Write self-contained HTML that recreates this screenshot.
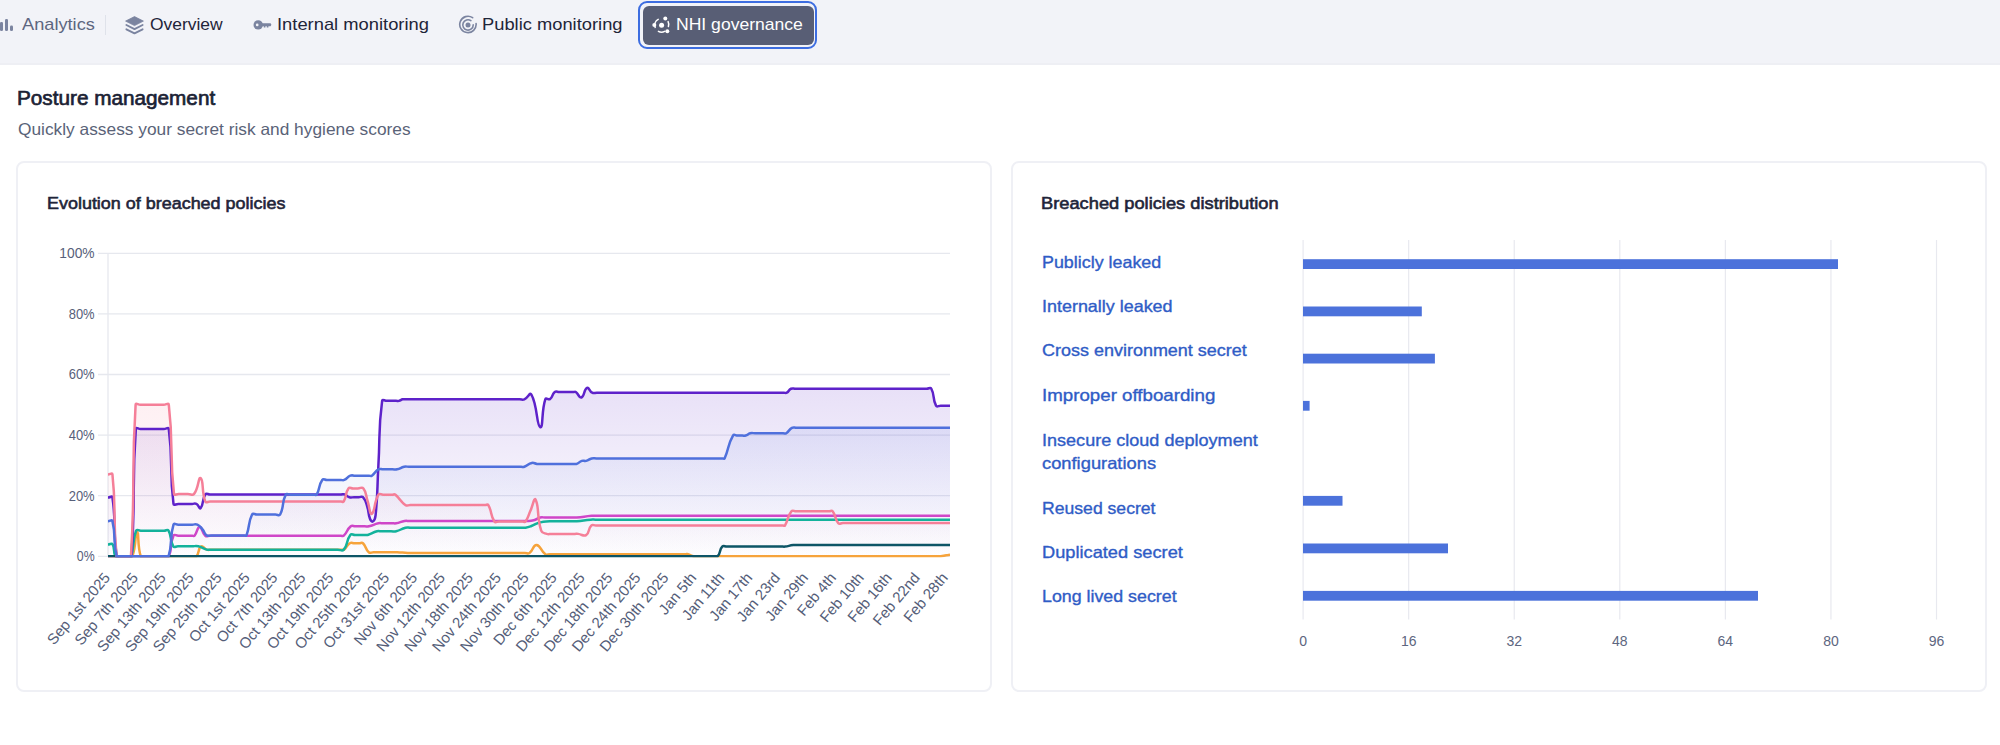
<!DOCTYPE html>
<html><head><meta charset="utf-8"><title>NHI governance</title>
<style>
html,body{margin:0;padding:0;background:#fff;}
body{width:2000px;height:745px;overflow:hidden;position:relative;font-family:"Liberation Sans", sans-serif;}
.t{position:absolute;white-space:nowrap;transform-origin:0 0;}
.nav{position:absolute;left:0;top:0;width:2000px;height:63px;background:#f2f3f8;border-bottom:2px solid #eeeff4;}
.ic{position:absolute;}
.sep{position:absolute;}
.ring{position:absolute;left:638px;top:1px;width:175px;height:43.5px;border:2px solid #3d6de0;border-radius:9px;}
.btn{position:absolute;left:642.5px;top:5.5px;width:171px;height:39px;background:#585e75;border-radius:6px;}
.card{position:absolute;top:161px;width:976px;height:531px;box-sizing:border-box;border:2px solid #eff0f5;border-radius:8px;background:#fff;}
svg.full{position:absolute;left:0;top:0;}
svg.full text{font-family:"Liberation Sans", sans-serif;}
</style></head><body>
<div class="nav"></div>

<svg class="ic" style="left:0;top:17px" width="14" height="15" viewBox="0 0 14 15">
 <rect x="0" y="5" width="3" height="9" rx="1.3" fill="#7b84a0"/>
 <rect x="5" y="2" width="3" height="12" rx="1.3" fill="#7b84a0"/>
 <rect x="10" y="8.5" width="3" height="5.5" rx="1.3" fill="#7b84a0"/>
</svg>
<div class="sep" style="left:104.5px;top:15px;width:1px;height:20px;background:#dfe2ea"></div>
<svg class="ic" style="left:124.5px;top:15.5px" width="19" height="19" viewBox="0 0 19 19">
 <path d="M9.5 0.6 L18.4 5.1 L9.5 9.6 L0.6 5.1 Z" fill="#7b84a0" stroke="#7b84a0" stroke-width="0.8" stroke-linejoin="round"/>
 <path d="M1.4 9.0 L9.5 13.1 L17.6 9.0" fill="none" stroke="#7b84a0" stroke-width="1.9" stroke-linejoin="round" stroke-linecap="round"/>
 <path d="M1.4 13.3 L9.5 17.4 L17.6 13.3" fill="none" stroke="#7b84a0" stroke-width="1.9" stroke-linejoin="round" stroke-linecap="round"/>
</svg>
<svg class="ic" style="left:253px;top:19px" width="20" height="12" viewBox="0 0 20 12">
 <circle cx="5.2" cy="5.9" r="4.7" fill="#7b84a0"/>
 <circle cx="4.2" cy="5.9" r="1.35" fill="#f2f3f8"/>
 <path d="M8.5 4.3 H17.6 L18.4 5.75 L17.6 7.3 H15.4 V8.6 H13.8 V7.3 H12.4 V8.4 H10.8 V7.3 H8.5 Z" fill="#7b84a0"/>
</svg>
<svg class="ic" style="left:457.7px;top:15px" width="20" height="20" viewBox="0 0 20 20">
 <path d="M14.6 2.7 A8.2 8.2 0 1 0 18.1 8.6" fill="none" stroke="#7b84a0" stroke-width="1.6" stroke-linecap="round"/>
 <path d="M12.9 5.6 A5.2 5.2 0 1 0 15.2 9.9" fill="none" stroke="#7b84a0" stroke-width="1.6" stroke-linecap="round"/>
 <circle cx="10" cy="9.9" r="2.5" fill="#7b84a0"/>
</svg>
<div class="ring"></div>
<div class="btn"></div>
<svg class="ic" style="left:652px;top:16px" width="19" height="18" viewBox="0 0 19 18">
 <path d="M6.2 3.4 A6.6 6.6 0 0 0 3.2 11.4" fill="none" stroke="#fff" stroke-width="1.5" stroke-linecap="round"/>
 <path d="M6.4 15.3 A6.6 6.6 0 0 0 12.6 15.4" fill="none" stroke="#fff" stroke-width="1.5" stroke-linecap="round"/>
 <path d="M16.1 5.6 A6.6 6.6 0 0 1 16.4 10.6" fill="none" stroke="#fff" stroke-width="1.5" stroke-linecap="round"/>
 <circle cx="9.6" cy="9.2" r="2.5" fill="#fff"/>
 <circle cx="13.3" cy="2.5" r="2.0" fill="#fff"/>
 <circle cx="2.3" cy="9.0" r="2.0" fill="#fff"/>
 <circle cx="15.3" cy="15.2" r="2.0" fill="#fff"/>
</svg>

<div class="card" style="left:16px"></div>
<div class="card" style="left:1011px"></div>
<svg class="full" width="2000" height="745" viewBox="0 0 2000 745">
<defs>
<clipPath id="plotclip"><rect x="108" y="250" width="842" height="307.6"/></clipPath>
<linearGradient id="gpurple" gradientUnits="userSpaceOnUse" x1="0" y1="385" x2="0" y2="560"><stop offset="0" stop-color="#4a0ec2" stop-opacity="0.13"/><stop offset="1" stop-color="#4a0ec2" stop-opacity="0.0"/></linearGradient>
<linearGradient id="gpink" gradientUnits="userSpaceOnUse" x1="0" y1="400" x2="0" y2="560"><stop offset="0" stop-color="#f57f98" stop-opacity="0.12"/><stop offset="1" stop-color="#f57f98" stop-opacity="0.0"/></linearGradient>
<linearGradient id="gblue" gradientUnits="userSpaceOnUse" x1="0" y1="425" x2="0" y2="560"><stop offset="0" stop-color="#4f70dc" stop-opacity="0.11"/><stop offset="1" stop-color="#4f70dc" stop-opacity="0.0"/></linearGradient>
</defs><line x1="98" x2="950" y1="556.30" y2="556.30" stroke="#e6e8ee" stroke-width="1.3"/>
<line x1="98" x2="950" y1="495.70" y2="495.70" stroke="#e6e8ee" stroke-width="1.3"/>
<line x1="98" x2="950" y1="435.10" y2="435.10" stroke="#e6e8ee" stroke-width="1.3"/>
<line x1="98" x2="950" y1="374.50" y2="374.50" stroke="#e6e8ee" stroke-width="1.3"/>
<line x1="98" x2="950" y1="313.90" y2="313.90" stroke="#e6e8ee" stroke-width="1.3"/>
<line x1="98" x2="950" y1="253.30" y2="253.30" stroke="#e6e8ee" stroke-width="1.3"/>
<line x1="108" x2="108" y1="253" y2="556.5" stroke="#e6e8ee" stroke-width="1.3"/>
<g clip-path="url(#plotclip)">
<path d="M108.00,497.52 C110.22,497.52 112.14,495.46 112.44,497.52 C116.47,524.85 112.54,529.07 116.65,556.30 C116.98,556.30 118.99,556.30 121.33,556.30 C123.67,556.30 123.67,556.30 126.01,556.30 C128.70,556.30 131.19,556.30 131.39,556.30 C136.10,495.25 131.43,490.42 135.83,429.04 C136.00,426.79 138.17,429.04 140.51,429.04 C142.85,429.04 142.85,429.04 145.19,429.04 C147.53,429.04 147.53,429.04 149.87,429.04 C152.21,429.04 152.21,429.04 154.55,429.04 C156.89,429.04 156.89,429.04 159.22,429.04 C161.56,429.04 161.56,429.04 163.90,429.04 C166.36,429.04 168.52,426.74 168.81,429.04 C173.31,464.16 169.09,468.66 173.49,503.88 C173.77,506.08 175.83,503.88 178.17,503.88 C180.51,503.88 180.51,503.88 182.85,503.88 C185.19,503.88 185.19,503.88 187.53,503.88 C189.87,503.88 189.87,503.88 192.20,503.88 C194.31,503.88 194.67,503.00 196.41,503.88 C198.88,505.13 199.32,509.50 200.62,508.12 C203.77,504.80 201.77,499.64 205.30,494.49 C206.45,492.82 207.64,494.49 209.98,494.49 C212.32,494.49 212.32,494.49 214.66,494.49 C217.00,494.49 217.00,494.49 219.34,494.49 C221.68,494.49 221.68,494.49 224.01,494.49 C226.35,494.49 226.35,494.49 228.69,494.49 C231.03,494.49 231.03,494.49 233.37,494.49 C235.71,494.49 235.71,494.49 238.05,494.49 C240.39,494.49 240.39,494.49 242.73,494.49 C245.07,494.49 245.07,494.49 247.40,494.49 C249.74,494.49 249.74,494.49 252.08,494.49 C254.42,494.49 254.42,494.49 256.76,494.49 C259.10,494.49 259.10,494.49 261.44,494.49 C263.78,494.49 263.78,494.49 266.12,494.49 C268.46,494.49 268.46,494.49 270.79,494.49 C273.13,494.49 273.13,494.49 275.47,494.49 C277.81,494.49 277.81,494.49 280.15,494.49 C282.49,494.49 282.49,494.49 284.83,494.49 C287.17,494.49 287.17,494.49 289.51,494.49 C291.85,494.49 291.85,494.49 294.18,494.49 C296.52,494.49 296.52,494.49 298.86,494.49 C301.20,494.49 301.20,494.49 303.54,494.49 C305.88,494.49 305.88,494.49 308.22,494.49 C310.56,494.49 310.56,494.49 312.90,494.49 C315.24,494.49 315.24,494.49 317.57,494.49 C319.91,494.49 319.91,494.49 322.25,494.49 C324.59,494.49 324.59,494.49 326.93,494.49 C329.27,494.49 329.27,494.49 331.61,494.49 C333.95,494.49 333.95,494.49 336.29,494.49 C338.63,494.49 338.63,494.49 340.96,494.49 C342.84,494.49 342.99,493.93 344.71,494.49 C347.20,495.29 346.88,496.48 349.38,497.21 C351.55,497.85 351.72,497.21 354.06,497.21 C356.40,497.21 356.40,497.21 358.74,497.21 C360.85,497.21 361.71,495.87 362.95,497.21 C365.92,500.42 365.62,501.57 367.16,506.30 C369.13,512.33 367.82,512.93 369.97,518.73 C370.63,520.51 371.74,522.07 372.77,521.45 C374.54,520.40 375.25,518.69 375.58,515.39 C378.06,490.67 376.96,490.40 378.39,465.40 C380.23,433.13 378.20,430.95 382.13,400.86 C382.41,398.68 384.47,400.86 386.81,400.86 C389.15,400.86 389.15,400.86 391.49,400.86 C393.83,400.86 393.83,400.86 396.16,400.86 C397.57,400.86 397.63,401.17 398.97,400.86 C400.90,400.41 400.76,399.70 402.71,399.35 C404.97,398.94 405.05,399.35 407.39,399.35 C409.73,399.35 409.73,399.35 412.07,399.35 C414.41,399.35 414.41,399.35 416.75,399.35 C419.09,399.35 419.09,399.35 421.43,399.35 C423.76,399.35 423.76,399.35 426.10,399.35 C428.44,399.35 428.44,399.35 430.78,399.35 C433.12,399.35 433.12,399.35 435.46,399.35 C437.80,399.35 437.80,399.35 440.14,399.35 C442.48,399.35 442.48,399.35 444.82,399.35 C447.15,399.35 447.15,399.35 449.49,399.35 C451.83,399.35 451.83,399.35 454.17,399.35 C456.51,399.35 456.51,399.35 458.85,399.35 C461.19,399.35 461.19,399.35 463.53,399.35 C465.87,399.35 465.87,399.35 468.21,399.35 C470.55,399.35 470.55,399.35 472.88,399.35 C475.22,399.35 475.22,399.35 477.56,399.35 C479.90,399.35 479.90,399.35 482.24,399.35 C484.58,399.35 484.58,399.35 486.92,399.35 C489.26,399.35 489.26,399.35 491.60,399.35 C493.94,399.35 493.94,399.35 496.27,399.35 C498.61,399.35 498.61,399.35 500.95,399.35 C503.29,399.35 503.29,399.35 505.63,399.35 C507.97,399.35 507.97,399.35 510.31,399.35 C512.65,399.35 512.65,399.35 514.99,399.35 C517.33,399.35 517.33,399.35 519.66,399.35 C522.00,399.35 522.27,400.20 524.34,399.35 C528.12,397.78 529.76,391.70 531.36,394.50 C537.71,405.63 536.44,425.99 540.25,427.22 C543.46,428.26 541.17,411.15 545.39,399.04 C546.08,397.07 548.40,400.29 550.07,399.04 C553.07,396.81 551.75,394.31 554.75,392.07 C556.42,390.83 557.09,392.07 559.43,392.07 C561.77,392.07 561.77,392.07 564.11,392.07 C566.44,392.07 566.44,392.07 568.78,392.07 C571.12,392.07 571.12,392.07 573.46,392.07 C574.63,392.07 574.89,391.45 575.80,392.07 C578.86,394.17 579.10,398.40 581.41,397.53 C584.72,396.28 583.73,389.32 587.03,387.83 C589.11,386.89 589.22,391.22 592.17,392.68 C594.13,393.65 594.51,392.68 596.85,392.68 C599.19,392.68 599.19,392.68 601.53,392.68 C603.87,392.68 603.87,392.68 606.21,392.68 C608.55,392.68 608.55,392.68 610.88,392.68 C613.22,392.68 613.22,392.68 615.56,392.68 C617.90,392.68 617.90,392.68 620.24,392.68 C622.58,392.68 622.58,392.68 624.92,392.68 C627.26,392.68 627.26,392.68 629.60,392.68 C631.94,392.68 631.94,392.68 634.27,392.68 C636.61,392.68 636.61,392.68 638.95,392.68 C641.29,392.68 641.29,392.68 643.63,392.68 C645.97,392.68 645.97,392.68 648.31,392.68 C650.65,392.68 650.65,392.68 652.99,392.68 C655.33,392.68 655.33,392.68 657.66,392.68 C660.00,392.68 660.00,392.68 662.34,392.68 C664.68,392.68 664.68,392.68 667.02,392.68 C669.36,392.68 669.36,392.68 671.70,392.68 C674.04,392.68 674.04,392.68 676.38,392.68 C678.72,392.68 678.72,392.68 681.05,392.68 C683.39,392.68 683.39,392.68 685.73,392.68 C688.07,392.68 688.07,392.68 690.41,392.68 C692.75,392.68 692.75,392.68 695.09,392.68 C697.43,392.68 697.43,392.68 699.77,392.68 C702.11,392.68 702.11,392.68 704.44,392.68 C706.78,392.68 706.78,392.68 709.12,392.68 C711.46,392.68 711.46,392.68 713.80,392.68 C716.14,392.68 716.14,392.68 718.48,392.68 C720.82,392.68 720.82,392.68 723.16,392.68 C725.50,392.68 725.50,392.68 727.84,392.68 C730.17,392.68 730.17,392.68 732.51,392.68 C734.85,392.68 734.85,392.68 737.19,392.68 C739.53,392.68 739.53,392.68 741.87,392.68 C744.21,392.68 744.21,392.68 746.55,392.68 C748.89,392.68 748.89,392.68 751.23,392.68 C753.56,392.68 753.56,392.68 755.90,392.68 C758.24,392.68 758.24,392.68 760.58,392.68 C762.92,392.68 762.92,392.68 765.26,392.68 C767.60,392.68 767.60,392.68 769.94,392.68 C772.28,392.68 772.28,392.68 774.62,392.68 C776.95,392.68 776.95,392.68 779.29,392.68 C781.63,392.68 781.63,392.68 783.97,392.68 C785.37,392.68 785.63,393.32 786.78,392.68 C789.14,391.36 788.53,389.83 790.99,388.74 C792.98,387.86 793.33,388.74 795.67,388.74 C798.00,388.74 798.00,388.74 800.34,388.74 C802.68,388.74 802.68,388.74 805.02,388.74 C807.36,388.74 807.36,388.74 809.70,388.74 C812.04,388.74 812.04,388.74 814.38,388.74 C816.72,388.74 816.72,388.74 819.06,388.74 C821.39,388.74 821.39,388.74 823.73,388.74 C826.07,388.74 826.07,388.74 828.41,388.74 C830.75,388.74 830.75,388.74 833.09,388.74 C835.43,388.74 835.43,388.74 837.77,388.74 C840.11,388.74 840.11,388.74 842.45,388.74 C844.79,388.74 844.79,388.74 847.12,388.74 C849.46,388.74 849.46,388.74 851.80,388.74 C854.14,388.74 854.14,388.74 856.48,388.74 C858.82,388.74 858.82,388.74 861.16,388.74 C863.50,388.74 863.50,388.74 865.84,388.74 C868.17,388.74 868.17,388.74 870.51,388.74 C872.85,388.74 872.85,388.74 875.19,388.74 C877.53,388.74 877.53,388.74 879.87,388.74 C882.21,388.74 882.21,388.74 884.55,388.74 C886.89,388.74 886.89,388.74 889.23,388.74 C891.57,388.74 891.57,388.74 893.90,388.74 C896.24,388.74 896.24,388.74 898.58,388.74 C900.92,388.74 900.92,388.74 903.26,388.74 C905.60,388.74 905.60,388.74 907.94,388.74 C910.28,388.74 910.28,388.74 912.62,388.74 C914.95,388.74 914.95,388.74 917.29,388.74 C919.63,388.74 919.63,388.74 921.97,388.74 C924.31,388.74 924.31,388.74 926.65,388.74 C928.99,388.74 930.35,386.96 931.33,388.74 C935.02,395.44 932.31,399.01 936.01,405.71 C936.99,407.49 938.35,405.71 940.68,405.71 C943.02,405.71 943.02,405.71 945.36,405.71 C947.68,405.71 947.68,405.71 950.00,405.71 L950,556.30 L108,556.30 Z" fill="url(#gpurple)"/>
<path d="M108.00,474.49 C110.22,474.49 112.22,472.39 112.44,474.49 C116.55,513.29 112.45,517.60 116.65,556.30 C116.89,556.30 118.99,556.30 121.33,556.30 C123.67,556.30 123.67,556.30 126.01,556.30 C128.47,556.30 130.77,556.30 130.92,556.30 C135.57,482.93 131.06,478.28 135.60,404.80 C135.74,402.53 137.94,404.80 140.28,404.80 C142.62,404.80 142.62,404.80 144.96,404.80 C147.30,404.80 147.30,404.80 149.63,404.80 C151.97,404.80 151.97,404.80 154.31,404.80 C156.65,404.80 156.65,404.80 158.99,404.80 C161.33,404.80 161.33,404.80 163.67,404.80 C166.24,404.80 168.53,402.37 168.81,404.80 C173.68,446.91 169.29,451.56 173.96,493.88 C174.20,496.10 176.30,493.88 178.64,493.88 C180.98,493.88 180.98,493.88 183.32,493.88 C185.65,493.88 185.65,493.88 187.99,493.88 C191.03,493.88 192.42,495.95 194.08,493.88 C198.73,488.07 198.28,476.54 200.62,478.13 C203.89,480.33 201.39,491.71 205.30,501.46 C206.07,503.37 207.64,501.46 209.98,501.46 C212.32,501.46 212.32,501.46 214.66,501.46 C217.00,501.46 217.00,501.46 219.34,501.46 C221.68,501.46 221.68,501.46 224.01,501.46 C226.35,501.46 226.35,501.46 228.69,501.46 C231.03,501.46 231.03,501.46 233.37,501.46 C235.71,501.46 235.71,501.46 238.05,501.46 C240.39,501.46 240.39,501.46 242.73,501.46 C245.07,501.46 245.07,501.46 247.40,501.46 C249.74,501.46 249.74,501.46 252.08,501.46 C254.42,501.46 254.42,501.46 256.76,501.46 C259.10,501.46 259.10,501.46 261.44,501.46 C263.78,501.46 263.78,501.46 266.12,501.46 C268.46,501.46 268.46,501.46 270.79,501.46 C273.13,501.46 273.13,501.46 275.47,501.46 C277.81,501.46 277.81,501.46 280.15,501.46 C282.49,501.46 282.49,501.46 284.83,501.46 C287.17,501.46 287.17,501.46 289.51,501.46 C291.85,501.46 291.85,501.46 294.18,501.46 C296.52,501.46 296.52,501.46 298.86,501.46 C301.20,501.46 301.20,501.46 303.54,501.46 C305.88,501.46 305.88,501.46 308.22,501.46 C310.56,501.46 310.56,501.46 312.90,501.46 C315.24,501.46 315.24,501.46 317.57,501.46 C319.91,501.46 319.91,501.46 322.25,501.46 C324.59,501.46 324.59,501.46 326.93,501.46 C329.27,501.46 329.27,501.46 331.61,501.46 C333.95,501.46 333.95,501.46 336.29,501.46 C338.63,501.46 338.63,501.46 340.96,501.46 C342.37,501.46 343.14,502.56 343.77,501.46 C346.88,496.04 344.95,493.30 348.45,488.43 C349.63,486.78 350.79,488.43 353.13,488.43 C355.47,488.43 355.47,488.43 357.81,488.43 C360.61,488.43 361.97,486.55 363.42,488.43 C366.88,492.91 365.52,494.79 367.63,501.15 C369.73,507.52 369.70,515.17 371.84,513.88 C375.08,511.92 373.83,502.46 378.39,494.64 C379.44,492.84 380.73,494.64 383.07,494.64 C385.41,494.64 385.41,494.64 387.74,494.64 C390.08,494.64 390.08,494.64 392.42,494.64 C393.83,494.64 394.16,493.88 395.23,494.64 C398.13,496.69 397.71,497.54 400.38,500.24 C402.85,502.76 402.56,503.63 405.52,505.09 C407.48,506.06 407.86,505.09 410.20,505.09 C412.54,505.09 412.54,505.09 414.88,505.09 C417.22,505.09 417.22,505.09 419.55,505.09 C421.89,505.09 421.89,505.09 424.23,505.09 C426.57,505.09 426.57,505.09 428.91,505.09 C431.25,505.09 431.25,505.09 433.59,505.09 C435.93,505.09 435.93,505.09 438.27,505.09 C440.61,505.09 440.61,505.09 442.94,505.09 C445.28,505.09 445.28,505.09 447.62,505.09 C449.96,505.09 449.96,505.09 452.30,505.09 C454.64,505.09 454.64,505.09 456.98,505.09 C459.32,505.09 459.32,505.09 461.66,505.09 C464.00,505.09 464.00,505.09 466.33,505.09 C468.67,505.09 468.67,505.09 471.01,505.09 C473.35,505.09 473.35,505.09 475.69,505.09 C478.03,505.09 478.03,505.09 480.37,505.09 C482.71,505.09 482.71,505.09 485.05,505.09 C486.68,505.09 487.58,503.80 488.32,505.09 C492.26,511.98 490.16,515.00 494.40,521.45 C495.54,523.18 496.74,521.45 499.08,521.45 C501.42,521.45 501.42,521.45 503.76,521.45 C506.10,521.45 506.10,521.45 508.44,521.45 C510.78,521.45 510.78,521.45 513.11,521.45 C515.45,521.45 515.45,521.45 517.79,521.45 C520.13,521.45 520.13,521.45 522.47,521.45 C523.99,521.45 524.69,522.55 525.51,521.45 C528.67,517.25 527.98,516.16 530.42,510.85 C533.01,505.25 534.05,496.86 535.57,499.64 C539.43,506.71 536.54,516.37 541.18,530.54 C542.15,533.49 543.80,532.91 546.80,533.88 C548.94,534.57 549.14,533.88 551.47,533.88 C553.81,533.88 553.81,533.88 556.15,533.88 C558.49,533.88 558.49,533.88 560.83,533.88 C563.17,533.88 563.17,533.88 565.51,533.88 C567.85,533.88 567.85,533.88 570.19,533.88 C572.53,533.88 572.53,533.88 574.86,533.88 C576.50,533.88 576.51,533.70 578.14,533.88 C582.13,534.31 583.30,536.86 586.09,535.09 C589.85,532.70 587.81,528.88 591.24,525.55 C592.72,524.11 593.58,525.55 595.92,525.55 C598.25,525.55 598.25,525.55 600.59,525.55 C602.93,525.55 602.93,525.55 605.27,525.55 C607.61,525.55 607.61,525.55 609.95,525.55 C612.29,525.55 612.29,525.55 614.63,525.55 C616.97,525.55 616.97,525.55 619.31,525.55 C621.64,525.55 621.64,525.55 623.98,525.55 C626.32,525.55 626.32,525.55 628.66,525.55 C631.00,525.55 631.00,525.55 633.34,525.55 C635.68,525.55 635.68,525.55 638.02,525.55 C640.36,525.55 640.36,525.55 642.70,525.55 C645.03,525.55 645.03,525.55 647.37,525.55 C649.71,525.55 649.71,525.55 652.05,525.55 C654.39,525.55 654.39,525.55 656.73,525.55 C659.07,525.55 659.07,525.55 661.41,525.55 C663.75,525.55 663.75,525.55 666.09,525.55 C668.42,525.55 668.42,525.55 670.76,525.55 C673.10,525.55 673.10,525.55 675.44,525.55 C677.78,525.55 677.78,525.55 680.12,525.55 C682.46,525.55 682.46,525.55 684.80,525.55 C687.14,525.55 687.14,525.55 689.48,525.55 C691.81,525.55 691.81,525.55 694.15,525.55 C696.49,525.55 696.49,525.55 698.83,525.55 C701.17,525.55 701.17,525.55 703.51,525.55 C705.85,525.55 705.85,525.55 708.19,525.55 C710.53,525.55 710.53,525.55 712.87,525.55 C715.20,525.55 715.20,525.55 717.54,525.55 C719.88,525.55 719.88,525.55 722.22,525.55 C724.56,525.55 724.56,525.55 726.90,525.55 C729.24,525.55 729.24,525.55 731.58,525.55 C733.92,525.55 733.92,525.55 736.26,525.55 C738.59,525.55 738.59,525.55 740.93,525.55 C743.27,525.55 743.27,525.55 745.61,525.55 C747.95,525.55 747.95,525.55 750.29,525.55 C752.63,525.55 752.63,525.55 754.97,525.55 C757.31,525.55 757.31,525.55 759.65,525.55 C761.98,525.55 761.98,525.55 764.32,525.55 C766.66,525.55 766.66,525.55 769.00,525.55 C771.34,525.55 771.34,525.55 773.68,525.55 C776.02,525.55 776.02,525.55 778.36,525.55 C780.70,525.55 780.70,525.55 783.04,525.55 C783.97,525.55 784.46,526.30 784.91,525.55 C788.67,519.18 787.13,516.79 791.46,511.30 C792.75,509.67 793.79,511.30 796.13,511.30 C798.47,511.30 798.47,511.30 800.81,511.30 C803.15,511.30 803.15,511.30 805.49,511.30 C807.83,511.30 807.83,511.30 810.17,511.30 C812.51,511.30 812.51,511.30 814.85,511.30 C817.18,511.30 817.18,511.30 819.52,511.30 C821.86,511.30 821.86,511.30 824.20,511.30 C826.54,511.30 826.54,511.30 828.88,511.30 C830.75,511.30 831.58,509.99 832.62,511.30 C836.26,515.90 834.45,518.77 838.24,523.12 C839.59,524.68 840.57,523.12 842.91,523.12 C845.25,523.12 845.25,523.12 847.59,523.12 C849.93,523.12 849.93,523.12 852.27,523.12 C854.61,523.12 854.61,523.12 856.95,523.12 C859.29,523.12 859.29,523.12 861.63,523.12 C863.96,523.12 863.96,523.12 866.30,523.12 C868.64,523.12 868.64,523.12 870.98,523.12 C873.32,523.12 873.32,523.12 875.66,523.12 C878.00,523.12 878.00,523.12 880.34,523.12 C882.68,523.12 882.68,523.12 885.02,523.12 C887.35,523.12 887.35,523.12 889.69,523.12 C892.03,523.12 892.03,523.12 894.37,523.12 C896.71,523.12 896.71,523.12 899.05,523.12 C901.39,523.12 901.39,523.12 903.73,523.12 C906.07,523.12 906.07,523.12 908.41,523.12 C910.74,523.12 910.74,523.12 913.08,523.12 C915.42,523.12 915.42,523.12 917.76,523.12 C920.10,523.12 920.10,523.12 922.44,523.12 C924.78,523.12 924.78,523.12 927.12,523.12 C929.46,523.12 929.46,523.12 931.80,523.12 C934.13,523.12 934.13,523.12 936.47,523.12 C938.81,523.12 938.81,523.12 941.15,523.12 C943.49,523.12 943.49,523.12 945.83,523.12 C947.91,523.12 947.91,523.12 950.00,523.12 L950,556.30 L108,556.30 Z" fill="url(#gpink)"/>
<path d="M108.00,521.15 C110.22,521.15 111.96,519.19 112.44,521.15 C116.29,536.77 112.73,540.78 116.65,556.30 C117.17,556.30 118.99,556.30 121.33,556.30 C123.67,556.30 123.67,556.30 126.01,556.30 C128.35,556.30 128.35,556.30 130.69,556.30 C133.03,556.30 133.03,556.30 135.37,556.30 C137.71,556.30 137.71,556.30 140.04,556.30 C142.38,556.30 142.38,556.30 144.72,556.30 C147.06,556.30 147.06,556.30 149.40,556.30 C151.74,556.30 151.74,556.30 154.08,556.30 C156.42,556.30 156.42,556.30 158.76,556.30 C161.10,556.30 161.10,556.30 163.43,556.30 C165.98,556.30 167.84,556.30 168.53,556.30 C172.87,542.64 169.29,538.45 173.49,524.64 C174.11,522.62 175.83,524.64 178.17,524.64 C180.51,524.64 180.51,524.64 182.85,524.64 C185.19,524.64 185.19,524.64 187.53,524.64 C189.87,524.64 189.87,524.64 192.20,524.64 C194.78,524.64 195.16,523.64 197.35,524.64 C200.31,525.99 200.22,526.72 202.50,529.33 C204.90,532.10 203.99,533.54 206.71,535.39 C208.43,536.57 209.04,535.39 211.38,535.39 C213.72,535.39 213.72,535.39 216.06,535.39 C218.40,535.39 218.40,535.39 220.74,535.39 C223.08,535.39 223.08,535.39 225.42,535.39 C227.76,535.39 227.76,535.39 230.10,535.39 C232.43,535.39 232.43,535.39 234.77,535.39 C237.11,535.39 237.11,535.39 239.45,535.39 C241.79,535.39 241.79,535.39 244.13,535.39 C245.30,535.39 246.08,536.41 246.47,535.39 C250.06,525.96 247.85,523.08 252.08,514.49 C253.00,512.63 254.42,514.49 256.76,514.49 C259.10,514.49 259.10,514.49 261.44,514.49 C263.78,514.49 263.78,514.49 266.12,514.49 C268.46,514.49 268.46,514.49 270.79,514.49 C273.13,514.49 273.13,514.49 275.47,514.49 C277.81,514.49 279.20,516.32 280.15,514.49 C284.34,506.40 281.57,502.73 285.76,494.64 C286.72,492.80 288.10,494.64 290.44,494.64 C292.78,494.64 292.78,494.64 295.12,494.64 C297.46,494.64 297.46,494.64 299.80,494.64 C302.14,494.64 302.14,494.64 304.48,494.64 C306.81,494.64 306.81,494.64 309.15,494.64 C311.49,494.64 311.49,494.64 313.83,494.64 C315.24,494.64 316.00,495.75 316.64,494.64 C320.21,488.40 318.29,485.61 322.25,479.94 C323.43,478.26 324.59,479.94 326.93,479.94 C329.27,479.94 329.27,479.94 331.61,479.94 C333.95,479.94 333.95,479.94 336.29,479.94 C338.63,479.94 338.63,479.94 340.96,479.94 C342.60,479.94 342.81,480.59 344.24,479.94 C347.48,478.47 347.02,477.00 350.32,475.70 C352.40,474.88 352.66,475.70 355.00,475.70 C357.34,475.70 357.34,475.70 359.68,475.70 C362.02,475.70 362.02,475.70 364.35,475.70 C366.69,475.70 366.69,475.70 369.03,475.70 C370.44,475.70 370.74,476.45 371.84,475.70 C375.42,473.27 374.68,471.44 378.39,469.34 C380.29,468.26 380.73,469.34 383.07,469.34 C385.41,469.34 385.41,469.34 387.74,469.34 C390.08,469.34 390.08,469.34 392.42,469.34 C394.76,469.34 394.85,469.83 397.10,469.34 C400.70,468.55 400.52,467.56 404.12,466.76 C406.37,466.27 406.46,466.76 408.80,466.76 C411.13,466.76 411.13,466.76 413.47,466.76 C415.81,466.76 415.81,466.76 418.15,466.76 C420.49,466.76 420.49,466.76 422.83,466.76 C425.17,466.76 425.17,466.76 427.51,466.76 C429.85,466.76 429.85,466.76 432.19,466.76 C434.52,466.76 434.52,466.76 436.86,466.76 C439.20,466.76 439.20,466.76 441.54,466.76 C443.88,466.76 443.88,466.76 446.22,466.76 C448.56,466.76 448.56,466.76 450.90,466.76 C453.24,466.76 453.24,466.76 455.58,466.76 C457.91,466.76 457.91,466.76 460.25,466.76 C462.59,466.76 462.59,466.76 464.93,466.76 C467.27,466.76 467.27,466.76 469.61,466.76 C471.95,466.76 471.95,466.76 474.29,466.76 C476.63,466.76 476.63,466.76 478.97,466.76 C481.30,466.76 481.30,466.76 483.64,466.76 C485.98,466.76 485.98,466.76 488.32,466.76 C490.66,466.76 490.66,466.76 493.00,466.76 C495.34,466.76 495.34,466.76 497.68,466.76 C500.02,466.76 500.02,466.76 502.36,466.76 C504.69,466.76 504.69,466.76 507.03,466.76 C509.37,466.76 509.37,466.76 511.71,466.76 C514.05,466.76 514.05,466.76 516.39,466.76 C518.73,466.76 518.73,466.76 521.07,466.76 C522.70,466.76 522.83,467.30 524.34,466.76 C528.21,465.40 527.94,463.86 531.83,462.98 C534.25,462.42 534.38,463.65 536.97,463.88 C539.29,464.10 539.31,463.88 541.65,463.88 C543.99,463.88 543.99,463.88 546.33,463.88 C548.67,463.88 548.67,463.88 551.01,463.88 C553.35,463.88 553.35,463.88 555.68,463.88 C558.02,463.88 558.02,463.88 560.36,463.88 C562.70,463.88 562.70,463.88 565.04,463.88 C567.38,463.88 567.38,463.88 569.72,463.88 C572.06,463.88 572.06,463.88 574.40,463.88 C575.57,463.88 575.68,464.31 576.74,463.88 C579.42,462.80 579.14,461.74 581.88,460.85 C583.82,460.23 584.09,461.35 586.09,460.85 C589.00,460.14 588.79,459.12 591.71,458.43 C593.94,457.91 594.04,458.43 596.38,458.43 C598.72,458.43 598.72,458.43 601.06,458.43 C603.40,458.43 603.40,458.43 605.74,458.43 C608.08,458.43 608.08,458.43 610.42,458.43 C612.76,458.43 612.76,458.43 615.10,458.43 C617.43,458.43 617.43,458.43 619.77,458.43 C622.11,458.43 622.11,458.43 624.45,458.43 C626.79,458.43 626.79,458.43 629.13,458.43 C631.47,458.43 631.47,458.43 633.81,458.43 C636.15,458.43 636.15,458.43 638.49,458.43 C640.82,458.43 640.82,458.43 643.16,458.43 C645.50,458.43 645.50,458.43 647.84,458.43 C650.18,458.43 650.18,458.43 652.52,458.43 C654.86,458.43 654.86,458.43 657.20,458.43 C659.54,458.43 659.54,458.43 661.88,458.43 C664.21,458.43 664.21,458.43 666.55,458.43 C668.89,458.43 668.89,458.43 671.23,458.43 C673.57,458.43 673.57,458.43 675.91,458.43 C678.25,458.43 678.25,458.43 680.59,458.43 C682.93,458.43 682.93,458.43 685.27,458.43 C687.60,458.43 687.60,458.43 689.94,458.43 C692.28,458.43 692.28,458.43 694.62,458.43 C696.96,458.43 696.96,458.43 699.30,458.43 C701.64,458.43 701.64,458.43 703.98,458.43 C706.32,458.43 706.32,458.43 708.66,458.43 C710.99,458.43 710.99,458.43 713.33,458.43 C715.67,458.43 715.67,458.43 718.01,458.43 C720.35,458.43 720.35,458.43 722.69,458.43 C723.62,458.43 724.19,459.25 724.56,458.43 C729.34,447.81 727.49,445.15 732.98,435.55 C734.04,433.71 735.32,435.55 737.66,435.55 C740.00,435.55 740.00,435.55 742.34,435.55 C743.97,435.55 744.08,435.99 745.61,435.55 C748.05,434.86 747.83,433.88 750.29,433.28 C752.50,432.74 752.63,433.28 754.97,433.28 C757.31,433.28 757.31,433.28 759.65,433.28 C761.98,433.28 761.98,433.28 764.32,433.28 C766.66,433.28 766.66,433.28 769.00,433.28 C771.34,433.28 771.34,433.28 773.68,433.28 C776.02,433.28 776.02,433.28 778.36,433.28 C780.70,433.28 780.70,433.28 783.04,433.28 C784.67,433.28 785.00,434.09 786.31,433.28 C789.44,431.36 788.70,429.53 791.92,427.83 C793.85,426.81 794.26,427.83 796.60,427.83 C798.94,427.83 798.94,427.83 801.28,427.83 C803.62,427.83 803.62,427.83 805.96,427.83 C808.30,427.83 808.30,427.83 810.64,427.83 C812.97,427.83 812.97,427.83 815.31,427.83 C817.65,427.83 817.65,427.83 819.99,427.83 C822.33,427.83 822.33,427.83 824.67,427.83 C827.01,427.83 827.01,427.83 829.35,427.83 C831.69,427.83 831.69,427.83 834.03,427.83 C836.36,427.83 836.36,427.83 838.70,427.83 C841.04,427.83 841.04,427.83 843.38,427.83 C845.72,427.83 845.72,427.83 848.06,427.83 C850.40,427.83 850.40,427.83 852.74,427.83 C855.08,427.83 855.08,427.83 857.42,427.83 C859.75,427.83 859.75,427.83 862.09,427.83 C864.43,427.83 864.43,427.83 866.77,427.83 C869.11,427.83 869.11,427.83 871.45,427.83 C873.79,427.83 873.79,427.83 876.13,427.83 C878.47,427.83 878.47,427.83 880.81,427.83 C883.14,427.83 883.14,427.83 885.48,427.83 C887.82,427.83 887.82,427.83 890.16,427.83 C892.50,427.83 892.50,427.83 894.84,427.83 C897.18,427.83 897.18,427.83 899.52,427.83 C901.86,427.83 901.86,427.83 904.20,427.83 C906.53,427.83 906.53,427.83 908.87,427.83 C911.21,427.83 911.21,427.83 913.55,427.83 C915.89,427.83 915.89,427.83 918.23,427.83 C920.57,427.83 920.57,427.83 922.91,427.83 C925.25,427.83 925.25,427.83 927.59,427.83 C929.92,427.83 929.92,427.83 932.26,427.83 C934.60,427.83 934.60,427.83 936.94,427.83 C939.28,427.83 939.28,427.83 941.62,427.83 C943.96,427.83 943.96,427.83 946.30,427.83 C948.15,427.83 948.15,427.83 950.00,427.83 L950,556.30 L108,556.30 Z" fill="url(#gblue)"/>
<path d="M108.00,556.30 C110.34,556.30 110.34,556.30 112.68,556.30 C115.02,556.30 115.02,556.30 117.36,556.30 C119.69,556.30 119.69,556.30 122.03,556.30 C124.37,556.30 124.37,556.30 126.71,556.30 C129.52,556.30 131.38,556.30 132.33,556.30 C136.53,546.28 134.89,531.76 137.00,531.76 C139.10,531.76 137.20,545.97 140.75,556.30 C141.41,556.30 143.09,556.30 145.42,556.30 C147.76,556.30 147.76,556.30 150.10,556.30 C152.44,556.30 152.44,556.30 154.78,556.30 C157.12,556.30 157.12,556.30 159.46,556.30 C161.80,556.30 161.80,556.30 164.14,556.30 C166.47,556.30 166.47,556.30 168.81,556.30 C171.15,556.30 171.15,556.30 173.49,556.30 C175.83,556.30 175.83,556.30 178.17,556.30 C180.51,556.30 180.51,556.30 182.85,556.30 C185.19,556.30 185.19,556.30 187.53,556.30 C189.87,556.30 189.87,556.30 192.20,556.30 C194.31,556.30 195.18,556.30 196.41,556.30 C199.62,552.75 197.86,548.55 201.09,546.45 C203.01,545.21 203.72,548.71 206.71,549.63 C208.87,550.30 209.04,549.63 211.38,549.63 C213.72,549.63 213.72,549.63 216.06,549.63 C218.40,549.63 218.40,549.63 220.74,549.63 C223.08,549.63 223.08,549.63 225.42,549.63 C227.76,549.63 227.76,549.63 230.10,549.63 C232.43,549.63 232.43,549.63 234.77,549.63 C237.11,549.63 237.11,549.63 239.45,549.63 C241.79,549.63 241.79,549.63 244.13,549.63 C246.47,549.63 246.47,549.63 248.81,549.63 C251.15,549.63 251.15,549.63 253.49,549.63 C255.82,549.63 255.82,549.63 258.16,549.63 C260.50,549.63 260.50,549.63 262.84,549.63 C265.18,549.63 265.18,549.63 267.52,549.63 C269.86,549.63 269.86,549.63 272.20,549.63 C274.54,549.63 274.54,549.63 276.88,549.63 C279.21,549.63 279.21,549.63 281.55,549.63 C283.89,549.63 283.89,549.63 286.23,549.63 C288.57,549.63 288.57,549.63 290.91,549.63 C293.25,549.63 293.25,549.63 295.59,549.63 C297.93,549.63 297.93,549.63 300.27,549.63 C302.60,549.63 302.60,549.63 304.94,549.63 C307.28,549.63 307.28,549.63 309.62,549.63 C311.96,549.63 311.96,549.63 314.30,549.63 C316.64,549.63 316.64,549.63 318.98,549.63 C321.32,549.63 321.32,549.63 323.66,549.63 C325.99,549.63 325.99,549.63 328.33,549.63 C330.67,549.63 330.67,549.63 333.01,549.63 C335.35,549.63 335.35,549.63 337.69,549.63 C340.03,549.63 340.03,549.63 342.37,549.63 C343.30,549.63 343.56,550.21 344.24,549.63 C347.31,547.03 346.54,545.32 349.85,543.27 C351.68,542.14 352.19,543.27 354.53,543.27 C356.87,543.27 356.87,543.27 359.21,543.27 C361.08,543.27 361.71,542.11 362.95,543.27 C366.50,546.58 365.14,549.10 368.80,552.21 C370.40,553.57 371.14,552.21 373.48,552.21 C375.82,552.21 375.82,552.21 378.15,552.21 C380.49,552.21 380.49,552.21 382.83,552.21 C385.17,552.21 385.17,552.21 387.51,552.21 C389.85,552.21 389.85,552.21 392.19,552.21 C394.64,552.21 394.65,552.09 397.10,552.21 C402.48,552.47 402.48,552.70 407.86,552.97 C410.19,553.08 410.20,552.97 412.54,552.97 C414.88,552.97 414.88,552.97 417.22,552.97 C419.55,552.97 419.55,552.97 421.89,552.97 C424.23,552.97 424.23,552.97 426.57,552.97 C428.91,552.97 428.91,552.97 431.25,552.97 C433.59,552.97 433.59,552.97 435.93,552.97 C438.27,552.97 438.27,552.97 440.61,552.97 C442.94,552.97 442.94,552.97 445.28,552.97 C447.62,552.97 447.62,552.97 449.96,552.97 C452.30,552.97 452.30,552.97 454.64,552.97 C456.98,552.97 456.98,552.97 459.32,552.97 C461.66,552.97 461.66,552.97 464.00,552.97 C466.33,552.97 466.33,552.97 468.67,552.97 C471.01,552.97 471.01,552.97 473.35,552.97 C475.69,552.97 475.69,552.97 478.03,552.97 C480.37,552.97 480.37,552.97 482.71,552.97 C485.05,552.97 485.05,552.97 487.39,552.97 C489.72,552.97 489.72,552.97 492.06,552.97 C494.40,552.97 494.40,552.97 496.74,552.97 C499.08,552.97 499.08,552.97 501.42,552.97 C503.76,552.97 503.76,552.97 506.10,552.97 C508.44,552.97 508.44,552.97 510.78,552.97 C513.11,552.97 513.11,552.97 515.45,552.97 C517.79,552.97 517.79,552.97 520.13,552.97 C522.47,552.97 522.47,552.97 524.81,552.97 C527.15,552.97 527.70,554.19 529.49,552.97 C533.55,550.18 532.89,544.66 536.50,544.94 C540.85,545.27 540.42,550.79 545.39,554.18 C547.21,555.41 547.73,554.18 550.07,554.18 C552.41,554.18 552.41,554.18 554.75,554.18 C557.09,554.18 557.09,554.18 559.43,554.18 C561.77,554.18 561.77,554.18 564.11,554.18 C566.44,554.18 566.44,554.18 568.78,554.18 C571.12,554.18 571.12,554.18 573.46,554.18 C575.80,554.18 575.80,554.18 578.14,554.18 C580.48,554.18 580.48,554.18 582.82,554.18 C585.16,554.18 585.16,554.18 587.50,554.18 C589.83,554.18 589.83,554.18 592.17,554.18 C594.51,554.18 594.51,554.18 596.85,554.18 C599.19,554.18 599.19,554.18 601.53,554.18 C603.87,554.18 603.87,554.18 606.21,554.18 C608.55,554.18 608.55,554.18 610.88,554.18 C613.22,554.18 613.22,554.18 615.56,554.18 C617.90,554.18 617.90,554.18 620.24,554.18 C622.58,554.18 622.58,554.18 624.92,554.18 C627.26,554.18 627.26,554.18 629.60,554.18 C631.94,554.18 631.94,554.18 634.27,554.18 C636.61,554.18 636.61,554.18 638.95,554.18 C641.29,554.18 641.29,554.18 643.63,554.18 C645.97,554.18 645.97,554.18 648.31,554.18 C650.65,554.18 650.65,554.18 652.99,554.18 C655.33,554.18 655.33,554.18 657.66,554.18 C660.00,554.18 660.00,554.18 662.34,554.18 C664.68,554.18 664.68,554.18 667.02,554.18 C669.36,554.18 669.36,554.18 671.70,554.18 C674.04,554.18 674.04,554.18 676.38,554.18 C678.72,554.18 678.72,554.18 681.05,554.18 C683.39,554.18 683.39,554.18 685.73,554.18 C686.90,554.18 686.96,553.88 688.07,554.18 C690.93,554.94 690.79,555.70 693.69,556.30 C695.94,556.30 696.02,556.30 698.36,556.30 C700.70,556.30 700.70,556.30 703.04,556.30 C705.38,556.30 705.38,556.30 707.72,556.30 C710.06,556.30 710.06,556.30 712.40,556.30 C714.74,556.30 714.74,556.30 717.08,556.30 C719.41,556.30 719.41,556.30 721.75,556.30 C724.09,556.30 724.09,556.30 726.43,556.30 C728.77,556.30 728.77,556.30 731.11,556.30 C733.45,556.30 733.45,556.30 735.79,556.30 C738.13,556.30 738.13,556.30 740.47,556.30 C742.80,556.30 742.80,556.30 745.14,556.30 C747.48,556.30 747.48,556.30 749.82,556.30 C752.16,556.30 752.16,556.30 754.50,556.30 C756.84,556.30 756.84,556.30 759.18,556.30 C761.52,556.30 761.52,556.30 763.86,556.30 C766.19,556.30 766.19,556.30 768.53,556.30 C770.87,556.30 770.87,556.30 773.21,556.30 C775.55,556.30 775.55,556.30 777.89,556.30 C780.23,556.30 780.23,556.30 782.57,556.30 C784.91,556.30 784.91,556.30 787.25,556.30 C789.58,556.30 789.58,556.30 791.92,556.30 C794.26,556.30 794.26,556.30 796.60,556.30 C798.94,556.30 798.94,556.30 801.28,556.30 C803.62,556.30 803.62,556.30 805.96,556.30 C808.30,556.30 808.30,556.30 810.64,556.30 C812.97,556.30 812.97,556.30 815.31,556.30 C817.65,556.30 817.65,556.30 819.99,556.30 C822.33,556.30 822.33,556.30 824.67,556.30 C827.01,556.30 827.01,556.30 829.35,556.30 C831.69,556.30 831.69,556.30 834.03,556.30 C836.36,556.30 836.36,556.30 838.70,556.30 C841.04,556.30 841.04,556.30 843.38,556.30 C845.72,556.30 845.72,556.30 848.06,556.30 C850.40,556.30 850.40,556.30 852.74,556.30 C855.08,556.30 855.08,556.30 857.42,556.30 C859.75,556.30 859.75,556.30 862.09,556.30 C864.43,556.30 864.43,556.30 866.77,556.30 C869.11,556.30 869.11,556.30 871.45,556.30 C873.79,556.30 873.79,556.30 876.13,556.30 C878.47,556.30 878.47,556.30 880.81,556.30 C883.14,556.30 883.14,556.30 885.48,556.30 C887.82,556.30 887.82,556.30 890.16,556.30 C892.50,556.30 892.50,556.30 894.84,556.30 C897.18,556.30 897.18,556.30 899.52,556.30 C901.86,556.30 901.86,556.30 904.20,556.30 C906.53,556.30 906.53,556.30 908.87,556.30 C911.21,556.30 911.21,556.30 913.55,556.30 C915.89,556.30 915.89,556.30 918.23,556.30 C920.57,556.30 920.57,556.30 922.91,556.30 C925.25,556.30 925.25,556.30 927.59,556.30 C929.92,556.30 929.92,556.30 932.26,556.30 C934.60,556.30 934.60,556.30 936.94,556.30 C938.81,556.30 938.83,556.30 940.68,556.30 C943.51,555.98 943.48,555.70 946.30,555.24 C948.14,554.94 948.15,555.01 950.00,554.78" fill="none" stroke="#f6a33b" stroke-width="2.5" stroke-linejoin="round"/>
<path d="M108.00,556.30 C110.34,556.30 110.34,556.30 112.68,556.30 C115.02,556.30 115.02,556.30 117.36,556.30 C119.69,556.30 119.69,556.30 122.03,556.30 C124.37,556.30 124.37,556.30 126.71,556.30 C129.05,556.30 129.05,556.30 131.39,556.30 C133.73,556.30 133.73,556.30 136.07,556.30 C138.41,556.30 138.41,556.30 140.75,556.30 C143.09,556.30 143.09,556.30 145.42,556.30 C147.76,556.30 147.76,556.30 150.10,556.30 C152.44,556.30 152.44,556.30 154.78,556.30 C157.12,556.30 157.12,556.30 159.46,556.30 C161.80,556.30 161.80,556.30 164.14,556.30 C166.47,556.30 167.97,556.30 168.81,556.30 C172.64,547.87 169.66,544.13 173.49,535.70 C174.34,533.83 175.83,535.70 178.17,535.70 C180.51,535.70 180.51,535.70 182.85,535.70 C185.19,535.70 185.19,535.70 187.53,535.70 C189.87,535.70 189.87,535.70 192.20,535.70 C193.37,535.70 193.84,536.52 194.54,535.70 C197.59,532.12 197.03,526.91 199.69,526.91 C202.41,526.91 201.75,532.66 205.30,535.70 C206.90,537.06 207.64,535.70 209.98,535.70 C212.32,535.70 212.32,535.70 214.66,535.70 C217.00,535.70 217.00,535.70 219.34,535.70 C221.68,535.70 221.68,535.70 224.01,535.70 C226.35,535.70 226.35,535.70 228.69,535.70 C231.03,535.70 231.03,535.70 233.37,535.70 C235.71,535.70 235.71,535.70 238.05,535.70 C240.39,535.70 240.39,535.70 242.73,535.70 C245.07,535.70 245.07,535.70 247.40,535.70 C249.74,535.70 249.74,535.70 252.08,535.70 C254.42,535.70 254.42,535.70 256.76,535.70 C259.10,535.70 259.10,535.70 261.44,535.70 C263.78,535.70 263.78,535.70 266.12,535.70 C268.46,535.70 268.46,535.70 270.79,535.70 C273.13,535.70 273.13,535.70 275.47,535.70 C277.81,535.70 277.81,535.70 280.15,535.70 C282.49,535.70 282.49,535.70 284.83,535.70 C287.17,535.70 287.17,535.70 289.51,535.70 C291.85,535.70 291.85,535.70 294.18,535.70 C296.52,535.70 296.52,535.70 298.86,535.70 C301.20,535.70 301.20,535.70 303.54,535.70 C305.88,535.70 305.88,535.70 308.22,535.70 C310.56,535.70 310.56,535.70 312.90,535.70 C315.24,535.70 315.24,535.70 317.57,535.70 C319.91,535.70 319.91,535.70 322.25,535.70 C324.59,535.70 324.59,535.70 326.93,535.70 C329.27,535.70 329.27,535.70 331.61,535.70 C333.95,535.70 333.95,535.70 336.29,535.70 C338.63,535.70 338.63,535.70 340.96,535.70 C342.37,535.70 342.82,536.60 343.77,535.70 C347.73,531.91 346.61,529.66 350.79,526.30 C352.46,524.96 353.13,526.30 355.47,526.30 C357.81,526.30 357.81,526.30 360.14,526.30 C362.48,526.30 362.48,526.30 364.82,526.30 C366.81,526.30 366.88,526.73 368.80,526.30 C373.66,525.22 373.52,524.31 378.39,523.27 C380.65,522.79 380.73,523.27 383.07,523.27 C385.41,523.27 385.41,523.27 387.74,523.27 C390.08,523.27 390.08,523.27 392.42,523.27 C394.29,523.27 394.34,523.61 396.16,523.27 C400.42,522.48 400.32,521.74 404.59,521.00 C406.87,520.60 406.92,521.00 409.26,521.00 C411.60,521.00 411.60,521.00 413.94,521.00 C416.28,521.00 416.28,521.00 418.62,521.00 C420.96,521.00 420.96,521.00 423.30,521.00 C425.64,521.00 425.64,521.00 427.98,521.00 C430.31,521.00 430.31,521.00 432.65,521.00 C434.99,521.00 434.99,521.00 437.33,521.00 C439.67,521.00 439.67,521.00 442.01,521.00 C444.35,521.00 444.35,521.00 446.69,521.00 C449.03,521.00 449.03,521.00 451.37,521.00 C453.70,521.00 453.70,521.00 456.04,521.00 C458.38,521.00 458.38,521.00 460.72,521.00 C463.06,521.00 463.06,521.00 465.40,521.00 C467.74,521.00 467.74,521.00 470.08,521.00 C472.42,521.00 472.42,521.00 474.76,521.00 C477.09,521.00 477.09,521.00 479.43,521.00 C481.77,521.00 481.77,521.00 484.11,521.00 C486.45,521.00 486.45,521.00 488.79,521.00 C491.13,521.00 491.13,521.00 493.47,521.00 C495.81,521.00 495.81,521.00 498.15,521.00 C500.48,521.00 500.48,521.00 502.82,521.00 C505.16,521.00 505.16,521.00 507.50,521.00 C509.84,521.00 509.84,521.00 512.18,521.00 C514.52,521.00 514.52,521.00 516.86,521.00 C519.20,521.00 519.20,521.00 521.54,521.00 C523.64,521.00 523.65,521.13 525.75,521.00 C529.73,520.75 529.86,521.17 533.70,520.24 C537.11,519.42 536.86,518.34 540.25,517.52 C542.48,516.97 542.59,517.52 544.93,517.52 C547.26,517.52 547.26,517.52 549.60,517.52 C551.94,517.52 551.94,517.52 554.28,517.52 C556.62,517.52 556.62,517.52 558.96,517.52 C561.30,517.52 561.30,517.52 563.64,517.52 C565.98,517.52 565.98,517.52 568.32,517.52 C570.65,517.52 570.65,517.52 572.99,517.52 C574.86,517.52 574.87,517.68 576.74,517.52 C584.23,516.85 584.21,516.49 591.71,515.85 C594.03,515.65 594.04,515.85 596.38,515.85 C598.72,515.85 598.72,515.85 601.06,515.85 C603.40,515.85 603.40,515.85 605.74,515.85 C608.08,515.85 608.08,515.85 610.42,515.85 C612.76,515.85 612.76,515.85 615.10,515.85 C617.43,515.85 617.43,515.85 619.77,515.85 C622.11,515.85 622.11,515.85 624.45,515.85 C626.79,515.85 626.79,515.85 629.13,515.85 C631.47,515.85 631.47,515.85 633.81,515.85 C636.15,515.85 636.15,515.85 638.49,515.85 C640.82,515.85 640.82,515.85 643.16,515.85 C645.50,515.85 645.50,515.85 647.84,515.85 C650.18,515.85 650.18,515.85 652.52,515.85 C654.86,515.85 654.86,515.85 657.20,515.85 C659.54,515.85 659.54,515.85 661.88,515.85 C664.21,515.85 664.21,515.85 666.55,515.85 C668.89,515.85 668.89,515.85 671.23,515.85 C673.57,515.85 673.57,515.85 675.91,515.85 C678.25,515.85 678.25,515.85 680.59,515.85 C682.93,515.85 682.93,515.85 685.27,515.85 C687.60,515.85 687.60,515.85 689.94,515.85 C692.28,515.85 692.28,515.85 694.62,515.85 C696.96,515.85 696.96,515.85 699.30,515.85 C701.64,515.85 701.64,515.85 703.98,515.85 C706.32,515.85 706.32,515.85 708.66,515.85 C710.99,515.85 710.99,515.85 713.33,515.85 C715.67,515.85 715.67,515.85 718.01,515.85 C720.35,515.85 720.35,515.85 722.69,515.85 C725.03,515.85 725.03,515.85 727.37,515.85 C729.71,515.85 729.71,515.85 732.05,515.85 C734.38,515.85 734.38,515.85 736.72,515.85 C739.06,515.85 739.06,515.85 741.40,515.85 C743.74,515.85 743.74,515.85 746.08,515.85 C748.42,515.85 748.42,515.85 750.76,515.85 C753.10,515.85 753.10,515.85 755.44,515.85 C757.77,515.85 757.77,515.85 760.11,515.85 C762.45,515.85 762.45,515.85 764.79,515.85 C767.13,515.85 767.13,515.85 769.47,515.85 C771.81,515.85 771.81,515.85 774.15,515.85 C776.49,515.85 776.49,515.85 778.83,515.85 C781.16,515.85 781.16,515.85 783.50,515.85 C785.84,515.85 785.84,515.85 788.18,515.85 C790.52,515.85 790.52,515.85 792.86,515.85 C795.20,515.85 795.20,515.85 797.54,515.85 C799.88,515.85 799.88,515.85 802.22,515.85 C804.55,515.85 804.55,515.85 806.89,515.85 C809.23,515.85 809.23,515.85 811.57,515.85 C813.91,515.85 813.91,515.85 816.25,515.85 C818.59,515.85 818.59,515.85 820.93,515.85 C823.27,515.85 823.27,515.85 825.61,515.85 C827.94,515.85 827.94,515.85 830.28,515.85 C832.62,515.85 832.62,515.85 834.96,515.85 C837.30,515.85 837.30,515.85 839.64,515.85 C841.98,515.85 841.98,515.85 844.32,515.85 C846.66,515.85 846.66,515.85 849.00,515.85 C851.33,515.85 851.33,515.85 853.67,515.85 C856.01,515.85 856.01,515.85 858.35,515.85 C860.69,515.85 860.69,515.85 863.03,515.85 C865.37,515.85 865.37,515.85 867.71,515.85 C870.05,515.85 870.05,515.85 872.39,515.85 C874.72,515.85 874.72,515.85 877.06,515.85 C879.40,515.85 879.40,515.85 881.74,515.85 C884.08,515.85 884.08,515.85 886.42,515.85 C888.76,515.85 888.76,515.85 891.10,515.85 C893.44,515.85 893.44,515.85 895.78,515.85 C898.11,515.85 898.11,515.85 900.45,515.85 C902.79,515.85 902.79,515.85 905.13,515.85 C907.47,515.85 907.47,515.85 909.81,515.85 C912.15,515.85 912.15,515.85 914.49,515.85 C916.83,515.85 916.83,515.85 919.17,515.85 C921.50,515.85 921.50,515.85 923.84,515.85 C926.18,515.85 926.18,515.85 928.52,515.85 C930.86,515.85 930.86,515.85 933.20,515.85 C935.54,515.85 935.54,515.85 937.88,515.85 C940.22,515.85 940.22,515.85 942.56,515.85 C944.89,515.85 944.89,515.85 947.23,515.85 C948.62,515.85 948.62,515.85 950.00,515.85" fill="none" stroke="#cf46c8" stroke-width="2.5" stroke-linejoin="round"/>
<path d="M108.00,544.48 C110.34,544.48 111.64,542.84 112.68,544.48 C115.38,548.75 112.78,552.03 115.48,556.30 C116.53,556.30 117.82,556.30 120.16,556.30 C122.50,556.30 122.50,556.30 124.84,556.30 C127.18,556.30 127.18,556.30 129.52,556.30 C130.45,556.30 131.17,556.30 131.39,556.30 C134.44,544.36 132.10,541.55 136.07,530.70 C136.78,528.75 138.41,530.70 140.75,530.70 C143.09,530.70 143.09,530.70 145.42,530.70 C147.76,530.70 147.76,530.70 150.10,530.70 C152.44,530.70 152.44,530.70 154.78,530.70 C157.12,530.70 157.12,530.70 159.46,530.70 C161.80,530.70 161.80,530.70 164.14,530.70 C166.33,530.70 167.56,529.04 168.53,530.70 C172.13,536.84 169.60,540.24 173.26,546.30 C174.31,548.04 175.60,546.30 177.94,546.30 C180.28,546.30 180.28,546.30 182.61,546.30 C184.95,546.30 184.95,546.30 187.29,546.30 C189.63,546.30 189.63,546.30 191.97,546.30 C195.13,546.30 195.26,545.62 198.29,546.30 C202.63,547.28 202.39,548.54 206.71,549.63 C208.94,550.20 209.04,549.63 211.38,549.63 C213.72,549.63 213.72,549.63 216.06,549.63 C218.40,549.63 218.40,549.63 220.74,549.63 C223.08,549.63 223.08,549.63 225.42,549.63 C227.76,549.63 227.76,549.63 230.10,549.63 C232.43,549.63 232.43,549.63 234.77,549.63 C237.11,549.63 237.11,549.63 239.45,549.63 C241.79,549.63 241.79,549.63 244.13,549.63 C246.47,549.63 246.47,549.63 248.81,549.63 C251.15,549.63 251.15,549.63 253.49,549.63 C255.82,549.63 255.82,549.63 258.16,549.63 C260.50,549.63 260.50,549.63 262.84,549.63 C265.18,549.63 265.18,549.63 267.52,549.63 C269.86,549.63 269.86,549.63 272.20,549.63 C274.54,549.63 274.54,549.63 276.88,549.63 C279.21,549.63 279.21,549.63 281.55,549.63 C283.89,549.63 283.89,549.63 286.23,549.63 C288.57,549.63 288.57,549.63 290.91,549.63 C293.25,549.63 293.25,549.63 295.59,549.63 C297.93,549.63 297.93,549.63 300.27,549.63 C302.60,549.63 302.60,549.63 304.94,549.63 C307.28,549.63 307.28,549.63 309.62,549.63 C311.96,549.63 311.96,549.63 314.30,549.63 C316.64,549.63 316.64,549.63 318.98,549.63 C321.32,549.63 321.32,549.63 323.66,549.63 C325.99,549.63 325.99,549.63 328.33,549.63 C330.67,549.63 330.67,549.63 333.01,549.63 C335.35,549.63 335.35,549.63 337.69,549.63 C340.73,549.63 342.04,551.65 343.77,549.63 C348.35,544.30 345.97,540.63 350.32,534.94 C351.58,533.28 352.66,534.94 355.00,534.94 C357.34,534.94 357.34,534.94 359.68,534.94 C362.02,534.94 362.02,534.94 364.35,534.94 C365.99,534.94 366.08,535.39 367.63,534.94 C372.39,533.57 372.20,532.54 376.99,531.30 C379.22,530.72 379.32,531.30 381.66,531.30 C384.00,531.30 384.00,531.30 386.34,531.30 C388.68,531.30 388.68,531.30 391.02,531.30 C393.59,531.30 393.71,531.92 396.16,531.30 C400.96,530.10 400.73,528.91 405.52,527.67 C407.75,527.09 407.86,527.67 410.20,527.67 C412.54,527.67 412.54,527.67 414.88,527.67 C417.22,527.67 417.22,527.67 419.55,527.67 C421.89,527.67 421.89,527.67 424.23,527.67 C426.57,527.67 426.57,527.67 428.91,527.67 C431.25,527.67 431.25,527.67 433.59,527.67 C435.93,527.67 435.93,527.67 438.27,527.67 C440.61,527.67 440.61,527.67 442.94,527.67 C445.28,527.67 445.28,527.67 447.62,527.67 C449.96,527.67 449.96,527.67 452.30,527.67 C454.64,527.67 454.64,527.67 456.98,527.67 C459.32,527.67 459.32,527.67 461.66,527.67 C464.00,527.67 464.00,527.67 466.33,527.67 C468.67,527.67 468.67,527.67 471.01,527.67 C473.35,527.67 473.35,527.67 475.69,527.67 C478.03,527.67 478.03,527.67 480.37,527.67 C482.71,527.67 482.71,527.67 485.05,527.67 C487.39,527.67 487.39,527.67 489.72,527.67 C492.06,527.67 492.06,527.67 494.40,527.67 C496.74,527.67 496.74,527.67 499.08,527.67 C501.42,527.67 501.42,527.67 503.76,527.67 C506.10,527.67 506.10,527.67 508.44,527.67 C510.78,527.67 510.78,527.67 513.11,527.67 C515.45,527.67 515.45,527.67 517.79,527.67 C520.13,527.67 520.13,527.67 522.47,527.67 C523.99,527.67 524.03,527.94 525.51,527.67 C528.47,527.11 528.50,527.03 531.36,526.00 C535.87,524.38 535.64,523.55 540.25,522.36 C544.76,521.20 544.92,521.66 549.60,521.30 C551.93,521.13 551.94,521.30 554.28,521.30 C556.62,521.30 556.62,521.30 558.96,521.30 C561.30,521.30 561.30,521.30 563.64,521.30 C565.98,521.30 565.98,521.30 568.32,521.30 C570.65,521.30 570.65,521.30 572.99,521.30 C574.86,521.30 574.87,521.48 576.74,521.30 C583.76,520.64 583.74,520.26 590.77,519.64 C593.10,519.43 593.11,519.64 595.45,519.64 C597.79,519.64 597.79,519.64 600.13,519.64 C602.46,519.64 602.46,519.64 604.80,519.64 C607.14,519.64 607.14,519.64 609.48,519.64 C611.82,519.64 611.82,519.64 614.16,519.64 C616.50,519.64 616.50,519.64 618.84,519.64 C621.18,519.64 621.18,519.64 623.52,519.64 C625.85,519.64 625.85,519.64 628.19,519.64 C630.53,519.64 630.53,519.64 632.87,519.64 C635.21,519.64 635.21,519.64 637.55,519.64 C639.89,519.64 639.89,519.64 642.23,519.64 C644.57,519.64 644.57,519.64 646.91,519.64 C649.24,519.64 649.24,519.64 651.58,519.64 C653.92,519.64 653.92,519.64 656.26,519.64 C658.60,519.64 658.60,519.64 660.94,519.64 C663.28,519.64 663.28,519.64 665.62,519.64 C667.96,519.64 667.96,519.64 670.30,519.64 C672.63,519.64 672.63,519.64 674.97,519.64 C677.31,519.64 677.31,519.64 679.65,519.64 C681.99,519.64 681.99,519.64 684.33,519.64 C686.67,519.64 686.67,519.64 689.01,519.64 C691.35,519.64 691.35,519.64 693.69,519.64 C696.02,519.64 696.02,519.64 698.36,519.64 C700.70,519.64 700.70,519.64 703.04,519.64 C705.38,519.64 705.38,519.64 707.72,519.64 C710.06,519.64 710.06,519.64 712.40,519.64 C714.74,519.64 714.74,519.64 717.08,519.64 C719.41,519.64 719.41,519.64 721.75,519.64 C724.09,519.64 724.09,519.64 726.43,519.64 C728.77,519.64 728.77,519.64 731.11,519.64 C733.45,519.64 733.45,519.64 735.79,519.64 C738.13,519.64 738.13,519.64 740.47,519.64 C742.80,519.64 742.80,519.64 745.14,519.64 C747.48,519.64 747.48,519.64 749.82,519.64 C752.16,519.64 752.16,519.64 754.50,519.64 C756.84,519.64 756.84,519.64 759.18,519.64 C761.52,519.64 761.52,519.64 763.86,519.64 C766.19,519.64 766.19,519.64 768.53,519.64 C770.87,519.64 770.87,519.64 773.21,519.64 C775.55,519.64 775.55,519.64 777.89,519.64 C780.23,519.64 780.23,519.64 782.57,519.64 C784.91,519.64 784.91,519.64 787.25,519.64 C789.58,519.64 789.58,519.64 791.92,519.64 C794.26,519.64 794.26,519.64 796.60,519.64 C798.94,519.64 798.94,519.64 801.28,519.64 C803.62,519.64 803.62,519.64 805.96,519.64 C808.30,519.64 808.30,519.64 810.64,519.64 C812.97,519.64 812.97,519.64 815.31,519.64 C817.65,519.64 817.65,519.64 819.99,519.64 C822.33,519.64 822.33,519.64 824.67,519.64 C827.01,519.64 827.01,519.64 829.35,519.64 C831.69,519.64 831.69,519.64 834.03,519.64 C836.36,519.64 836.36,519.64 838.70,519.64 C841.04,519.64 841.04,519.64 843.38,519.64 C845.72,519.64 845.72,519.64 848.06,519.64 C850.40,519.64 850.40,519.64 852.74,519.64 C855.08,519.64 855.08,519.64 857.42,519.64 C859.75,519.64 859.75,519.64 862.09,519.64 C864.43,519.64 864.43,519.64 866.77,519.64 C869.11,519.64 869.11,519.64 871.45,519.64 C873.79,519.64 873.79,519.64 876.13,519.64 C878.47,519.64 878.47,519.64 880.81,519.64 C883.14,519.64 883.14,519.64 885.48,519.64 C887.82,519.64 887.82,519.64 890.16,519.64 C892.50,519.64 892.50,519.64 894.84,519.64 C897.18,519.64 897.18,519.64 899.52,519.64 C901.86,519.64 901.86,519.64 904.20,519.64 C906.53,519.64 906.53,519.64 908.87,519.64 C911.21,519.64 911.21,519.64 913.55,519.64 C915.89,519.64 915.89,519.64 918.23,519.64 C920.57,519.64 920.57,519.64 922.91,519.64 C925.25,519.64 925.25,519.64 927.59,519.64 C929.92,519.64 929.92,519.64 932.26,519.64 C934.60,519.64 934.60,519.64 936.94,519.64 C939.28,519.64 939.28,519.64 941.62,519.64 C943.96,519.64 943.96,519.64 946.30,519.64 C948.15,519.64 948.15,519.64 950.00,519.64" fill="none" stroke="#13b29b" stroke-width="2.5" stroke-linejoin="round"/>
<path d="M108.00,556.30 C110.34,556.30 110.34,556.30 112.68,556.30 C115.02,556.30 115.02,556.30 117.36,556.30 C119.69,556.30 119.69,556.30 122.03,556.30 C124.37,556.30 124.37,556.30 126.71,556.30 C129.05,556.30 129.05,556.30 131.39,556.30 C133.73,556.30 133.73,556.30 136.07,556.30 C138.41,556.30 138.41,556.30 140.75,556.30 C143.09,556.30 143.09,556.30 145.42,556.30 C147.76,556.30 147.76,556.30 150.10,556.30 C152.44,556.30 152.44,556.30 154.78,556.30 C157.12,556.30 157.12,556.30 159.46,556.30 C161.80,556.30 161.80,556.30 164.14,556.30 C166.47,556.30 166.47,556.30 168.81,556.30 C171.15,556.30 171.15,556.30 173.49,556.30 C175.83,556.30 175.83,556.30 178.17,556.30 C180.51,556.30 180.51,556.30 182.85,556.30 C185.19,556.30 185.19,556.30 187.53,556.30 C189.87,556.30 189.87,556.30 192.20,556.30 C194.54,556.30 194.54,556.30 196.88,556.30 C199.22,556.30 199.22,556.30 201.56,556.30 C203.90,556.30 203.90,556.30 206.24,556.30 C208.58,556.30 208.58,556.30 210.92,556.30 C213.25,556.30 213.25,556.30 215.59,556.30 C217.93,556.30 217.93,556.30 220.27,556.30 C222.61,556.30 222.61,556.30 224.95,556.30 C227.29,556.30 227.29,556.30 229.63,556.30 C231.97,556.30 231.97,556.30 234.31,556.30 C236.64,556.30 236.64,556.30 238.98,556.30 C241.32,556.30 241.32,556.30 243.66,556.30 C246.00,556.30 246.00,556.30 248.34,556.30 C250.68,556.30 250.68,556.30 253.02,556.30 C255.36,556.30 255.36,556.30 257.70,556.30 C260.04,556.30 260.04,556.30 262.37,556.30 C264.71,556.30 264.71,556.30 267.05,556.30 C269.39,556.30 269.39,556.30 271.73,556.30 C274.07,556.30 274.07,556.30 276.41,556.30 C278.75,556.30 278.75,556.30 281.09,556.30 C283.43,556.30 283.43,556.30 285.76,556.30 C288.10,556.30 288.10,556.30 290.44,556.30 C292.78,556.30 292.78,556.30 295.12,556.30 C297.46,556.30 297.46,556.30 299.80,556.30 C302.14,556.30 302.14,556.30 304.48,556.30 C306.81,556.30 306.81,556.30 309.15,556.30 C311.49,556.30 311.49,556.30 313.83,556.30 C316.17,556.30 316.17,556.30 318.51,556.30 C320.85,556.30 320.85,556.30 323.19,556.30 C325.53,556.30 325.53,556.30 327.87,556.30 C330.20,556.30 330.20,556.30 332.54,556.30 C334.88,556.30 334.88,556.30 337.22,556.30 C339.56,556.30 339.56,556.30 341.90,556.30 C344.24,556.30 344.24,556.30 346.58,556.30 C348.92,556.30 348.92,556.30 351.26,556.30 C353.59,556.30 353.59,556.30 355.93,556.30 C358.27,556.30 358.27,556.30 360.61,556.30 C362.95,556.30 362.95,556.30 365.29,556.30 C367.63,556.30 367.63,556.30 369.97,556.30 C372.31,556.30 372.31,556.30 374.65,556.30 C376.99,556.30 376.99,556.30 379.32,556.30 C381.66,556.30 381.66,556.30 384.00,556.30 C386.34,556.30 386.34,556.30 388.68,556.30 C391.02,556.30 391.02,556.30 393.36,556.30 C395.70,556.30 395.70,556.30 398.04,556.30 C400.38,556.30 400.38,556.30 402.71,556.30 C405.05,556.30 405.05,556.30 407.39,556.30 C409.73,556.30 409.73,556.30 412.07,556.30 C414.41,556.30 414.41,556.30 416.75,556.30 C419.09,556.30 419.09,556.30 421.43,556.30 C423.76,556.30 423.76,556.30 426.10,556.30 C428.44,556.30 428.44,556.30 430.78,556.30 C433.12,556.30 433.12,556.30 435.46,556.30 C437.80,556.30 437.80,556.30 440.14,556.30 C442.48,556.30 442.48,556.30 444.82,556.30 C447.15,556.30 447.15,556.30 449.49,556.30 C451.83,556.30 451.83,556.30 454.17,556.30 C456.51,556.30 456.51,556.30 458.85,556.30 C461.19,556.30 461.19,556.30 463.53,556.30 C465.87,556.30 465.87,556.30 468.21,556.30 C470.55,556.30 470.55,556.30 472.88,556.30 C475.22,556.30 475.22,556.30 477.56,556.30 C479.90,556.30 479.90,556.30 482.24,556.30 C484.58,556.30 484.58,556.30 486.92,556.30 C489.26,556.30 489.26,556.30 491.60,556.30 C493.94,556.30 493.94,556.30 496.27,556.30 C498.61,556.30 498.61,556.30 500.95,556.30 C503.29,556.30 503.29,556.30 505.63,556.30 C507.97,556.30 507.97,556.30 510.31,556.30 C512.65,556.30 512.65,556.30 514.99,556.30 C517.33,556.30 517.33,556.30 519.66,556.30 C522.00,556.30 522.00,556.30 524.34,556.30 C526.68,556.30 526.68,556.30 529.02,556.30 C531.36,556.30 531.36,556.30 533.70,556.30 C536.04,556.30 536.04,556.30 538.38,556.30 C540.71,556.30 540.71,556.30 543.05,556.30 C545.39,556.30 545.39,556.30 547.73,556.30 C550.07,556.30 550.07,556.30 552.41,556.30 C554.75,556.30 554.75,556.30 557.09,556.30 C559.43,556.30 559.43,556.30 561.77,556.30 C564.11,556.30 564.11,556.30 566.44,556.30 C568.78,556.30 568.78,556.30 571.12,556.30 C573.46,556.30 573.46,556.30 575.80,556.30 C578.14,556.30 578.14,556.30 580.48,556.30 C582.82,556.30 582.82,556.30 585.16,556.30 C587.50,556.30 587.50,556.30 589.83,556.30 C592.17,556.30 592.17,556.30 594.51,556.30 C596.85,556.30 596.85,556.30 599.19,556.30 C601.53,556.30 601.53,556.30 603.87,556.30 C606.21,556.30 606.21,556.30 608.55,556.30 C610.88,556.30 610.88,556.30 613.22,556.30 C615.56,556.30 615.56,556.30 617.90,556.30 C620.24,556.30 620.24,556.30 622.58,556.30 C624.92,556.30 624.92,556.30 627.26,556.30 C629.60,556.30 629.60,556.30 631.94,556.30 C634.28,556.30 634.28,556.30 636.61,556.30 C638.95,556.30 638.95,556.30 641.29,556.30 C643.63,556.30 643.63,556.30 645.97,556.30 C648.31,556.30 648.31,556.30 650.65,556.30 C652.99,556.30 652.99,556.30 655.33,556.30 C657.66,556.30 657.66,556.30 660.00,556.30 C662.34,556.30 662.34,556.30 664.68,556.30 C667.02,556.30 667.02,556.30 669.36,556.30 C671.70,556.30 671.70,556.30 674.04,556.30 C676.38,556.30 676.38,556.30 678.72,556.30 C681.06,556.30 681.06,556.30 683.39,556.30 C685.73,556.30 685.73,556.30 688.07,556.30 C690.41,556.30 690.41,556.30 692.75,556.30 C695.09,556.30 695.09,556.30 697.43,556.30 C699.77,556.30 699.77,556.30 702.11,556.30 C704.44,556.30 704.44,556.30 706.78,556.30 C709.12,556.30 709.12,556.30 711.46,556.30 C714.50,556.30 715.60,556.30 717.54,556.30 C720.98,553.20 718.96,549.98 722.22,546.60 C723.64,545.14 724.56,546.60 726.90,546.60 C729.24,546.60 729.24,546.60 731.58,546.60 C733.92,546.60 733.92,546.60 736.26,546.60 C738.59,546.60 738.59,546.60 740.93,546.60 C743.27,546.60 743.27,546.60 745.61,546.60 C747.95,546.60 747.95,546.60 750.29,546.60 C752.63,546.60 752.63,546.60 754.97,546.60 C757.31,546.60 757.31,546.60 759.65,546.60 C761.98,546.60 761.98,546.60 764.32,546.60 C766.66,546.60 766.66,546.60 769.00,546.60 C771.34,546.60 771.34,546.60 773.68,546.60 C776.02,546.60 776.02,546.60 778.36,546.60 C780.70,546.60 780.70,546.60 783.04,546.60 C783.97,546.60 783.98,546.74 784.91,546.60 C789.13,545.98 789.09,545.58 793.33,545.09 C795.64,544.82 795.67,545.09 798.00,545.09 C800.34,545.09 800.34,545.09 802.68,545.09 C805.02,545.09 805.02,545.09 807.36,545.09 C809.70,545.09 809.70,545.09 812.04,545.09 C814.38,545.09 814.38,545.09 816.72,545.09 C819.06,545.09 819.06,545.09 821.39,545.09 C823.73,545.09 823.73,545.09 826.07,545.09 C828.41,545.09 828.41,545.09 830.75,545.09 C833.09,545.09 833.09,545.09 835.43,545.09 C837.77,545.09 837.77,545.09 840.11,545.09 C842.45,545.09 842.45,545.09 844.78,545.09 C847.12,545.09 847.12,545.09 849.46,545.09 C851.80,545.09 851.80,545.09 854.14,545.09 C856.48,545.09 856.48,545.09 858.82,545.09 C861.16,545.09 861.16,545.09 863.50,545.09 C865.84,545.09 865.84,545.09 868.17,545.09 C870.51,545.09 870.51,545.09 872.85,545.09 C875.19,545.09 875.19,545.09 877.53,545.09 C879.87,545.09 879.87,545.09 882.21,545.09 C884.55,545.09 884.55,545.09 886.89,545.09 C889.23,545.09 889.23,545.09 891.56,545.09 C893.90,545.09 893.90,545.09 896.24,545.09 C898.58,545.09 898.58,545.09 900.92,545.09 C903.26,545.09 903.26,545.09 905.60,545.09 C907.94,545.09 907.94,545.09 910.28,545.09 C912.62,545.09 912.62,545.09 914.96,545.09 C917.29,545.09 917.29,545.09 919.63,545.09 C921.97,545.09 921.97,545.09 924.31,545.09 C926.65,545.09 926.65,545.09 928.99,545.09 C931.33,545.09 931.33,545.09 933.67,545.09 C936.01,545.09 936.01,545.09 938.35,545.09 C940.68,545.09 940.68,545.09 943.02,545.09 C945.36,545.09 945.36,545.09 947.70,545.09 C948.85,545.09 948.85,545.09 950.00,545.09" fill="none" stroke="#0d5566" stroke-width="2.5" stroke-linejoin="round"/>
<path d="M108.00,497.52 C110.22,497.52 112.14,495.46 112.44,497.52 C116.47,524.85 112.54,529.07 116.65,556.30 C116.98,556.30 118.99,556.30 121.33,556.30 C123.67,556.30 123.67,556.30 126.01,556.30 C128.70,556.30 131.19,556.30 131.39,556.30 C136.10,495.25 131.43,490.42 135.83,429.04 C136.00,426.79 138.17,429.04 140.51,429.04 C142.85,429.04 142.85,429.04 145.19,429.04 C147.53,429.04 147.53,429.04 149.87,429.04 C152.21,429.04 152.21,429.04 154.55,429.04 C156.89,429.04 156.89,429.04 159.22,429.04 C161.56,429.04 161.56,429.04 163.90,429.04 C166.36,429.04 168.52,426.74 168.81,429.04 C173.31,464.16 169.09,468.66 173.49,503.88 C173.77,506.08 175.83,503.88 178.17,503.88 C180.51,503.88 180.51,503.88 182.85,503.88 C185.19,503.88 185.19,503.88 187.53,503.88 C189.87,503.88 189.87,503.88 192.20,503.88 C194.31,503.88 194.67,503.00 196.41,503.88 C198.88,505.13 199.32,509.50 200.62,508.12 C203.77,504.80 201.77,499.64 205.30,494.49 C206.45,492.82 207.64,494.49 209.98,494.49 C212.32,494.49 212.32,494.49 214.66,494.49 C217.00,494.49 217.00,494.49 219.34,494.49 C221.68,494.49 221.68,494.49 224.01,494.49 C226.35,494.49 226.35,494.49 228.69,494.49 C231.03,494.49 231.03,494.49 233.37,494.49 C235.71,494.49 235.71,494.49 238.05,494.49 C240.39,494.49 240.39,494.49 242.73,494.49 C245.07,494.49 245.07,494.49 247.40,494.49 C249.74,494.49 249.74,494.49 252.08,494.49 C254.42,494.49 254.42,494.49 256.76,494.49 C259.10,494.49 259.10,494.49 261.44,494.49 C263.78,494.49 263.78,494.49 266.12,494.49 C268.46,494.49 268.46,494.49 270.79,494.49 C273.13,494.49 273.13,494.49 275.47,494.49 C277.81,494.49 277.81,494.49 280.15,494.49 C282.49,494.49 282.49,494.49 284.83,494.49 C287.17,494.49 287.17,494.49 289.51,494.49 C291.85,494.49 291.85,494.49 294.18,494.49 C296.52,494.49 296.52,494.49 298.86,494.49 C301.20,494.49 301.20,494.49 303.54,494.49 C305.88,494.49 305.88,494.49 308.22,494.49 C310.56,494.49 310.56,494.49 312.90,494.49 C315.24,494.49 315.24,494.49 317.57,494.49 C319.91,494.49 319.91,494.49 322.25,494.49 C324.59,494.49 324.59,494.49 326.93,494.49 C329.27,494.49 329.27,494.49 331.61,494.49 C333.95,494.49 333.95,494.49 336.29,494.49 C338.63,494.49 338.63,494.49 340.96,494.49 C342.84,494.49 342.99,493.93 344.71,494.49 C347.20,495.29 346.88,496.48 349.38,497.21 C351.55,497.85 351.72,497.21 354.06,497.21 C356.40,497.21 356.40,497.21 358.74,497.21 C360.85,497.21 361.71,495.87 362.95,497.21 C365.92,500.42 365.62,501.57 367.16,506.30 C369.13,512.33 367.82,512.93 369.97,518.73 C370.63,520.51 371.74,522.07 372.77,521.45 C374.54,520.40 375.25,518.69 375.58,515.39 C378.06,490.67 376.96,490.40 378.39,465.40 C380.23,433.13 378.20,430.95 382.13,400.86 C382.41,398.68 384.47,400.86 386.81,400.86 C389.15,400.86 389.15,400.86 391.49,400.86 C393.83,400.86 393.83,400.86 396.16,400.86 C397.57,400.86 397.63,401.17 398.97,400.86 C400.90,400.41 400.76,399.70 402.71,399.35 C404.97,398.94 405.05,399.35 407.39,399.35 C409.73,399.35 409.73,399.35 412.07,399.35 C414.41,399.35 414.41,399.35 416.75,399.35 C419.09,399.35 419.09,399.35 421.43,399.35 C423.76,399.35 423.76,399.35 426.10,399.35 C428.44,399.35 428.44,399.35 430.78,399.35 C433.12,399.35 433.12,399.35 435.46,399.35 C437.80,399.35 437.80,399.35 440.14,399.35 C442.48,399.35 442.48,399.35 444.82,399.35 C447.15,399.35 447.15,399.35 449.49,399.35 C451.83,399.35 451.83,399.35 454.17,399.35 C456.51,399.35 456.51,399.35 458.85,399.35 C461.19,399.35 461.19,399.35 463.53,399.35 C465.87,399.35 465.87,399.35 468.21,399.35 C470.55,399.35 470.55,399.35 472.88,399.35 C475.22,399.35 475.22,399.35 477.56,399.35 C479.90,399.35 479.90,399.35 482.24,399.35 C484.58,399.35 484.58,399.35 486.92,399.35 C489.26,399.35 489.26,399.35 491.60,399.35 C493.94,399.35 493.94,399.35 496.27,399.35 C498.61,399.35 498.61,399.35 500.95,399.35 C503.29,399.35 503.29,399.35 505.63,399.35 C507.97,399.35 507.97,399.35 510.31,399.35 C512.65,399.35 512.65,399.35 514.99,399.35 C517.33,399.35 517.33,399.35 519.66,399.35 C522.00,399.35 522.27,400.20 524.34,399.35 C528.12,397.78 529.76,391.70 531.36,394.50 C537.71,405.63 536.44,425.99 540.25,427.22 C543.46,428.26 541.17,411.15 545.39,399.04 C546.08,397.07 548.40,400.29 550.07,399.04 C553.07,396.81 551.75,394.31 554.75,392.07 C556.42,390.83 557.09,392.07 559.43,392.07 C561.77,392.07 561.77,392.07 564.11,392.07 C566.44,392.07 566.44,392.07 568.78,392.07 C571.12,392.07 571.12,392.07 573.46,392.07 C574.63,392.07 574.89,391.45 575.80,392.07 C578.86,394.17 579.10,398.40 581.41,397.53 C584.72,396.28 583.73,389.32 587.03,387.83 C589.11,386.89 589.22,391.22 592.17,392.68 C594.13,393.65 594.51,392.68 596.85,392.68 C599.19,392.68 599.19,392.68 601.53,392.68 C603.87,392.68 603.87,392.68 606.21,392.68 C608.55,392.68 608.55,392.68 610.88,392.68 C613.22,392.68 613.22,392.68 615.56,392.68 C617.90,392.68 617.90,392.68 620.24,392.68 C622.58,392.68 622.58,392.68 624.92,392.68 C627.26,392.68 627.26,392.68 629.60,392.68 C631.94,392.68 631.94,392.68 634.27,392.68 C636.61,392.68 636.61,392.68 638.95,392.68 C641.29,392.68 641.29,392.68 643.63,392.68 C645.97,392.68 645.97,392.68 648.31,392.68 C650.65,392.68 650.65,392.68 652.99,392.68 C655.33,392.68 655.33,392.68 657.66,392.68 C660.00,392.68 660.00,392.68 662.34,392.68 C664.68,392.68 664.68,392.68 667.02,392.68 C669.36,392.68 669.36,392.68 671.70,392.68 C674.04,392.68 674.04,392.68 676.38,392.68 C678.72,392.68 678.72,392.68 681.05,392.68 C683.39,392.68 683.39,392.68 685.73,392.68 C688.07,392.68 688.07,392.68 690.41,392.68 C692.75,392.68 692.75,392.68 695.09,392.68 C697.43,392.68 697.43,392.68 699.77,392.68 C702.11,392.68 702.11,392.68 704.44,392.68 C706.78,392.68 706.78,392.68 709.12,392.68 C711.46,392.68 711.46,392.68 713.80,392.68 C716.14,392.68 716.14,392.68 718.48,392.68 C720.82,392.68 720.82,392.68 723.16,392.68 C725.50,392.68 725.50,392.68 727.84,392.68 C730.17,392.68 730.17,392.68 732.51,392.68 C734.85,392.68 734.85,392.68 737.19,392.68 C739.53,392.68 739.53,392.68 741.87,392.68 C744.21,392.68 744.21,392.68 746.55,392.68 C748.89,392.68 748.89,392.68 751.23,392.68 C753.56,392.68 753.56,392.68 755.90,392.68 C758.24,392.68 758.24,392.68 760.58,392.68 C762.92,392.68 762.92,392.68 765.26,392.68 C767.60,392.68 767.60,392.68 769.94,392.68 C772.28,392.68 772.28,392.68 774.62,392.68 C776.95,392.68 776.95,392.68 779.29,392.68 C781.63,392.68 781.63,392.68 783.97,392.68 C785.37,392.68 785.63,393.32 786.78,392.68 C789.14,391.36 788.53,389.83 790.99,388.74 C792.98,387.86 793.33,388.74 795.67,388.74 C798.00,388.74 798.00,388.74 800.34,388.74 C802.68,388.74 802.68,388.74 805.02,388.74 C807.36,388.74 807.36,388.74 809.70,388.74 C812.04,388.74 812.04,388.74 814.38,388.74 C816.72,388.74 816.72,388.74 819.06,388.74 C821.39,388.74 821.39,388.74 823.73,388.74 C826.07,388.74 826.07,388.74 828.41,388.74 C830.75,388.74 830.75,388.74 833.09,388.74 C835.43,388.74 835.43,388.74 837.77,388.74 C840.11,388.74 840.11,388.74 842.45,388.74 C844.79,388.74 844.79,388.74 847.12,388.74 C849.46,388.74 849.46,388.74 851.80,388.74 C854.14,388.74 854.14,388.74 856.48,388.74 C858.82,388.74 858.82,388.74 861.16,388.74 C863.50,388.74 863.50,388.74 865.84,388.74 C868.17,388.74 868.17,388.74 870.51,388.74 C872.85,388.74 872.85,388.74 875.19,388.74 C877.53,388.74 877.53,388.74 879.87,388.74 C882.21,388.74 882.21,388.74 884.55,388.74 C886.89,388.74 886.89,388.74 889.23,388.74 C891.57,388.74 891.57,388.74 893.90,388.74 C896.24,388.74 896.24,388.74 898.58,388.74 C900.92,388.74 900.92,388.74 903.26,388.74 C905.60,388.74 905.60,388.74 907.94,388.74 C910.28,388.74 910.28,388.74 912.62,388.74 C914.95,388.74 914.95,388.74 917.29,388.74 C919.63,388.74 919.63,388.74 921.97,388.74 C924.31,388.74 924.31,388.74 926.65,388.74 C928.99,388.74 930.35,386.96 931.33,388.74 C935.02,395.44 932.31,399.01 936.01,405.71 C936.99,407.49 938.35,405.71 940.68,405.71 C943.02,405.71 943.02,405.71 945.36,405.71 C947.68,405.71 947.68,405.71 950.00,405.71" fill="none" stroke="#5e22ca" stroke-width="2.5" stroke-linejoin="round"/>
<path d="M108.00,474.49 C110.22,474.49 112.22,472.39 112.44,474.49 C116.55,513.29 112.45,517.60 116.65,556.30 C116.89,556.30 118.99,556.30 121.33,556.30 C123.67,556.30 123.67,556.30 126.01,556.30 C128.47,556.30 130.77,556.30 130.92,556.30 C135.57,482.93 131.06,478.28 135.60,404.80 C135.74,402.53 137.94,404.80 140.28,404.80 C142.62,404.80 142.62,404.80 144.96,404.80 C147.30,404.80 147.30,404.80 149.63,404.80 C151.97,404.80 151.97,404.80 154.31,404.80 C156.65,404.80 156.65,404.80 158.99,404.80 C161.33,404.80 161.33,404.80 163.67,404.80 C166.24,404.80 168.53,402.37 168.81,404.80 C173.68,446.91 169.29,451.56 173.96,493.88 C174.20,496.10 176.30,493.88 178.64,493.88 C180.98,493.88 180.98,493.88 183.32,493.88 C185.65,493.88 185.65,493.88 187.99,493.88 C191.03,493.88 192.42,495.95 194.08,493.88 C198.73,488.07 198.28,476.54 200.62,478.13 C203.89,480.33 201.39,491.71 205.30,501.46 C206.07,503.37 207.64,501.46 209.98,501.46 C212.32,501.46 212.32,501.46 214.66,501.46 C217.00,501.46 217.00,501.46 219.34,501.46 C221.68,501.46 221.68,501.46 224.01,501.46 C226.35,501.46 226.35,501.46 228.69,501.46 C231.03,501.46 231.03,501.46 233.37,501.46 C235.71,501.46 235.71,501.46 238.05,501.46 C240.39,501.46 240.39,501.46 242.73,501.46 C245.07,501.46 245.07,501.46 247.40,501.46 C249.74,501.46 249.74,501.46 252.08,501.46 C254.42,501.46 254.42,501.46 256.76,501.46 C259.10,501.46 259.10,501.46 261.44,501.46 C263.78,501.46 263.78,501.46 266.12,501.46 C268.46,501.46 268.46,501.46 270.79,501.46 C273.13,501.46 273.13,501.46 275.47,501.46 C277.81,501.46 277.81,501.46 280.15,501.46 C282.49,501.46 282.49,501.46 284.83,501.46 C287.17,501.46 287.17,501.46 289.51,501.46 C291.85,501.46 291.85,501.46 294.18,501.46 C296.52,501.46 296.52,501.46 298.86,501.46 C301.20,501.46 301.20,501.46 303.54,501.46 C305.88,501.46 305.88,501.46 308.22,501.46 C310.56,501.46 310.56,501.46 312.90,501.46 C315.24,501.46 315.24,501.46 317.57,501.46 C319.91,501.46 319.91,501.46 322.25,501.46 C324.59,501.46 324.59,501.46 326.93,501.46 C329.27,501.46 329.27,501.46 331.61,501.46 C333.95,501.46 333.95,501.46 336.29,501.46 C338.63,501.46 338.63,501.46 340.96,501.46 C342.37,501.46 343.14,502.56 343.77,501.46 C346.88,496.04 344.95,493.30 348.45,488.43 C349.63,486.78 350.79,488.43 353.13,488.43 C355.47,488.43 355.47,488.43 357.81,488.43 C360.61,488.43 361.97,486.55 363.42,488.43 C366.88,492.91 365.52,494.79 367.63,501.15 C369.73,507.52 369.70,515.17 371.84,513.88 C375.08,511.92 373.83,502.46 378.39,494.64 C379.44,492.84 380.73,494.64 383.07,494.64 C385.41,494.64 385.41,494.64 387.74,494.64 C390.08,494.64 390.08,494.64 392.42,494.64 C393.83,494.64 394.16,493.88 395.23,494.64 C398.13,496.69 397.71,497.54 400.38,500.24 C402.85,502.76 402.56,503.63 405.52,505.09 C407.48,506.06 407.86,505.09 410.20,505.09 C412.54,505.09 412.54,505.09 414.88,505.09 C417.22,505.09 417.22,505.09 419.55,505.09 C421.89,505.09 421.89,505.09 424.23,505.09 C426.57,505.09 426.57,505.09 428.91,505.09 C431.25,505.09 431.25,505.09 433.59,505.09 C435.93,505.09 435.93,505.09 438.27,505.09 C440.61,505.09 440.61,505.09 442.94,505.09 C445.28,505.09 445.28,505.09 447.62,505.09 C449.96,505.09 449.96,505.09 452.30,505.09 C454.64,505.09 454.64,505.09 456.98,505.09 C459.32,505.09 459.32,505.09 461.66,505.09 C464.00,505.09 464.00,505.09 466.33,505.09 C468.67,505.09 468.67,505.09 471.01,505.09 C473.35,505.09 473.35,505.09 475.69,505.09 C478.03,505.09 478.03,505.09 480.37,505.09 C482.71,505.09 482.71,505.09 485.05,505.09 C486.68,505.09 487.58,503.80 488.32,505.09 C492.26,511.98 490.16,515.00 494.40,521.45 C495.54,523.18 496.74,521.45 499.08,521.45 C501.42,521.45 501.42,521.45 503.76,521.45 C506.10,521.45 506.10,521.45 508.44,521.45 C510.78,521.45 510.78,521.45 513.11,521.45 C515.45,521.45 515.45,521.45 517.79,521.45 C520.13,521.45 520.13,521.45 522.47,521.45 C523.99,521.45 524.69,522.55 525.51,521.45 C528.67,517.25 527.98,516.16 530.42,510.85 C533.01,505.25 534.05,496.86 535.57,499.64 C539.43,506.71 536.54,516.37 541.18,530.54 C542.15,533.49 543.80,532.91 546.80,533.88 C548.94,534.57 549.14,533.88 551.47,533.88 C553.81,533.88 553.81,533.88 556.15,533.88 C558.49,533.88 558.49,533.88 560.83,533.88 C563.17,533.88 563.17,533.88 565.51,533.88 C567.85,533.88 567.85,533.88 570.19,533.88 C572.53,533.88 572.53,533.88 574.86,533.88 C576.50,533.88 576.51,533.70 578.14,533.88 C582.13,534.31 583.30,536.86 586.09,535.09 C589.85,532.70 587.81,528.88 591.24,525.55 C592.72,524.11 593.58,525.55 595.92,525.55 C598.25,525.55 598.25,525.55 600.59,525.55 C602.93,525.55 602.93,525.55 605.27,525.55 C607.61,525.55 607.61,525.55 609.95,525.55 C612.29,525.55 612.29,525.55 614.63,525.55 C616.97,525.55 616.97,525.55 619.31,525.55 C621.64,525.55 621.64,525.55 623.98,525.55 C626.32,525.55 626.32,525.55 628.66,525.55 C631.00,525.55 631.00,525.55 633.34,525.55 C635.68,525.55 635.68,525.55 638.02,525.55 C640.36,525.55 640.36,525.55 642.70,525.55 C645.03,525.55 645.03,525.55 647.37,525.55 C649.71,525.55 649.71,525.55 652.05,525.55 C654.39,525.55 654.39,525.55 656.73,525.55 C659.07,525.55 659.07,525.55 661.41,525.55 C663.75,525.55 663.75,525.55 666.09,525.55 C668.42,525.55 668.42,525.55 670.76,525.55 C673.10,525.55 673.10,525.55 675.44,525.55 C677.78,525.55 677.78,525.55 680.12,525.55 C682.46,525.55 682.46,525.55 684.80,525.55 C687.14,525.55 687.14,525.55 689.48,525.55 C691.81,525.55 691.81,525.55 694.15,525.55 C696.49,525.55 696.49,525.55 698.83,525.55 C701.17,525.55 701.17,525.55 703.51,525.55 C705.85,525.55 705.85,525.55 708.19,525.55 C710.53,525.55 710.53,525.55 712.87,525.55 C715.20,525.55 715.20,525.55 717.54,525.55 C719.88,525.55 719.88,525.55 722.22,525.55 C724.56,525.55 724.56,525.55 726.90,525.55 C729.24,525.55 729.24,525.55 731.58,525.55 C733.92,525.55 733.92,525.55 736.26,525.55 C738.59,525.55 738.59,525.55 740.93,525.55 C743.27,525.55 743.27,525.55 745.61,525.55 C747.95,525.55 747.95,525.55 750.29,525.55 C752.63,525.55 752.63,525.55 754.97,525.55 C757.31,525.55 757.31,525.55 759.65,525.55 C761.98,525.55 761.98,525.55 764.32,525.55 C766.66,525.55 766.66,525.55 769.00,525.55 C771.34,525.55 771.34,525.55 773.68,525.55 C776.02,525.55 776.02,525.55 778.36,525.55 C780.70,525.55 780.70,525.55 783.04,525.55 C783.97,525.55 784.46,526.30 784.91,525.55 C788.67,519.18 787.13,516.79 791.46,511.30 C792.75,509.67 793.79,511.30 796.13,511.30 C798.47,511.30 798.47,511.30 800.81,511.30 C803.15,511.30 803.15,511.30 805.49,511.30 C807.83,511.30 807.83,511.30 810.17,511.30 C812.51,511.30 812.51,511.30 814.85,511.30 C817.18,511.30 817.18,511.30 819.52,511.30 C821.86,511.30 821.86,511.30 824.20,511.30 C826.54,511.30 826.54,511.30 828.88,511.30 C830.75,511.30 831.58,509.99 832.62,511.30 C836.26,515.90 834.45,518.77 838.24,523.12 C839.59,524.68 840.57,523.12 842.91,523.12 C845.25,523.12 845.25,523.12 847.59,523.12 C849.93,523.12 849.93,523.12 852.27,523.12 C854.61,523.12 854.61,523.12 856.95,523.12 C859.29,523.12 859.29,523.12 861.63,523.12 C863.96,523.12 863.96,523.12 866.30,523.12 C868.64,523.12 868.64,523.12 870.98,523.12 C873.32,523.12 873.32,523.12 875.66,523.12 C878.00,523.12 878.00,523.12 880.34,523.12 C882.68,523.12 882.68,523.12 885.02,523.12 C887.35,523.12 887.35,523.12 889.69,523.12 C892.03,523.12 892.03,523.12 894.37,523.12 C896.71,523.12 896.71,523.12 899.05,523.12 C901.39,523.12 901.39,523.12 903.73,523.12 C906.07,523.12 906.07,523.12 908.41,523.12 C910.74,523.12 910.74,523.12 913.08,523.12 C915.42,523.12 915.42,523.12 917.76,523.12 C920.10,523.12 920.10,523.12 922.44,523.12 C924.78,523.12 924.78,523.12 927.12,523.12 C929.46,523.12 929.46,523.12 931.80,523.12 C934.13,523.12 934.13,523.12 936.47,523.12 C938.81,523.12 938.81,523.12 941.15,523.12 C943.49,523.12 943.49,523.12 945.83,523.12 C947.91,523.12 947.91,523.12 950.00,523.12" fill="none" stroke="#f57f98" stroke-width="2.5" stroke-linejoin="round"/>
<path d="M108.00,521.15 C110.22,521.15 111.96,519.19 112.44,521.15 C116.29,536.77 112.73,540.78 116.65,556.30 C117.17,556.30 118.99,556.30 121.33,556.30 C123.67,556.30 123.67,556.30 126.01,556.30 C128.35,556.30 128.35,556.30 130.69,556.30 C133.03,556.30 133.03,556.30 135.37,556.30 C137.71,556.30 137.71,556.30 140.04,556.30 C142.38,556.30 142.38,556.30 144.72,556.30 C147.06,556.30 147.06,556.30 149.40,556.30 C151.74,556.30 151.74,556.30 154.08,556.30 C156.42,556.30 156.42,556.30 158.76,556.30 C161.10,556.30 161.10,556.30 163.43,556.30 C165.98,556.30 167.84,556.30 168.53,556.30 C172.87,542.64 169.29,538.45 173.49,524.64 C174.11,522.62 175.83,524.64 178.17,524.64 C180.51,524.64 180.51,524.64 182.85,524.64 C185.19,524.64 185.19,524.64 187.53,524.64 C189.87,524.64 189.87,524.64 192.20,524.64 C194.78,524.64 195.16,523.64 197.35,524.64 C200.31,525.99 200.22,526.72 202.50,529.33 C204.90,532.10 203.99,533.54 206.71,535.39 C208.43,536.57 209.04,535.39 211.38,535.39 C213.72,535.39 213.72,535.39 216.06,535.39 C218.40,535.39 218.40,535.39 220.74,535.39 C223.08,535.39 223.08,535.39 225.42,535.39 C227.76,535.39 227.76,535.39 230.10,535.39 C232.43,535.39 232.43,535.39 234.77,535.39 C237.11,535.39 237.11,535.39 239.45,535.39 C241.79,535.39 241.79,535.39 244.13,535.39 C245.30,535.39 246.08,536.41 246.47,535.39 C250.06,525.96 247.85,523.08 252.08,514.49 C253.00,512.63 254.42,514.49 256.76,514.49 C259.10,514.49 259.10,514.49 261.44,514.49 C263.78,514.49 263.78,514.49 266.12,514.49 C268.46,514.49 268.46,514.49 270.79,514.49 C273.13,514.49 273.13,514.49 275.47,514.49 C277.81,514.49 279.20,516.32 280.15,514.49 C284.34,506.40 281.57,502.73 285.76,494.64 C286.72,492.80 288.10,494.64 290.44,494.64 C292.78,494.64 292.78,494.64 295.12,494.64 C297.46,494.64 297.46,494.64 299.80,494.64 C302.14,494.64 302.14,494.64 304.48,494.64 C306.81,494.64 306.81,494.64 309.15,494.64 C311.49,494.64 311.49,494.64 313.83,494.64 C315.24,494.64 316.00,495.75 316.64,494.64 C320.21,488.40 318.29,485.61 322.25,479.94 C323.43,478.26 324.59,479.94 326.93,479.94 C329.27,479.94 329.27,479.94 331.61,479.94 C333.95,479.94 333.95,479.94 336.29,479.94 C338.63,479.94 338.63,479.94 340.96,479.94 C342.60,479.94 342.81,480.59 344.24,479.94 C347.48,478.47 347.02,477.00 350.32,475.70 C352.40,474.88 352.66,475.70 355.00,475.70 C357.34,475.70 357.34,475.70 359.68,475.70 C362.02,475.70 362.02,475.70 364.35,475.70 C366.69,475.70 366.69,475.70 369.03,475.70 C370.44,475.70 370.74,476.45 371.84,475.70 C375.42,473.27 374.68,471.44 378.39,469.34 C380.29,468.26 380.73,469.34 383.07,469.34 C385.41,469.34 385.41,469.34 387.74,469.34 C390.08,469.34 390.08,469.34 392.42,469.34 C394.76,469.34 394.85,469.83 397.10,469.34 C400.70,468.55 400.52,467.56 404.12,466.76 C406.37,466.27 406.46,466.76 408.80,466.76 C411.13,466.76 411.13,466.76 413.47,466.76 C415.81,466.76 415.81,466.76 418.15,466.76 C420.49,466.76 420.49,466.76 422.83,466.76 C425.17,466.76 425.17,466.76 427.51,466.76 C429.85,466.76 429.85,466.76 432.19,466.76 C434.52,466.76 434.52,466.76 436.86,466.76 C439.20,466.76 439.20,466.76 441.54,466.76 C443.88,466.76 443.88,466.76 446.22,466.76 C448.56,466.76 448.56,466.76 450.90,466.76 C453.24,466.76 453.24,466.76 455.58,466.76 C457.91,466.76 457.91,466.76 460.25,466.76 C462.59,466.76 462.59,466.76 464.93,466.76 C467.27,466.76 467.27,466.76 469.61,466.76 C471.95,466.76 471.95,466.76 474.29,466.76 C476.63,466.76 476.63,466.76 478.97,466.76 C481.30,466.76 481.30,466.76 483.64,466.76 C485.98,466.76 485.98,466.76 488.32,466.76 C490.66,466.76 490.66,466.76 493.00,466.76 C495.34,466.76 495.34,466.76 497.68,466.76 C500.02,466.76 500.02,466.76 502.36,466.76 C504.69,466.76 504.69,466.76 507.03,466.76 C509.37,466.76 509.37,466.76 511.71,466.76 C514.05,466.76 514.05,466.76 516.39,466.76 C518.73,466.76 518.73,466.76 521.07,466.76 C522.70,466.76 522.83,467.30 524.34,466.76 C528.21,465.40 527.94,463.86 531.83,462.98 C534.25,462.42 534.38,463.65 536.97,463.88 C539.29,464.10 539.31,463.88 541.65,463.88 C543.99,463.88 543.99,463.88 546.33,463.88 C548.67,463.88 548.67,463.88 551.01,463.88 C553.35,463.88 553.35,463.88 555.68,463.88 C558.02,463.88 558.02,463.88 560.36,463.88 C562.70,463.88 562.70,463.88 565.04,463.88 C567.38,463.88 567.38,463.88 569.72,463.88 C572.06,463.88 572.06,463.88 574.40,463.88 C575.57,463.88 575.68,464.31 576.74,463.88 C579.42,462.80 579.14,461.74 581.88,460.85 C583.82,460.23 584.09,461.35 586.09,460.85 C589.00,460.14 588.79,459.12 591.71,458.43 C593.94,457.91 594.04,458.43 596.38,458.43 C598.72,458.43 598.72,458.43 601.06,458.43 C603.40,458.43 603.40,458.43 605.74,458.43 C608.08,458.43 608.08,458.43 610.42,458.43 C612.76,458.43 612.76,458.43 615.10,458.43 C617.43,458.43 617.43,458.43 619.77,458.43 C622.11,458.43 622.11,458.43 624.45,458.43 C626.79,458.43 626.79,458.43 629.13,458.43 C631.47,458.43 631.47,458.43 633.81,458.43 C636.15,458.43 636.15,458.43 638.49,458.43 C640.82,458.43 640.82,458.43 643.16,458.43 C645.50,458.43 645.50,458.43 647.84,458.43 C650.18,458.43 650.18,458.43 652.52,458.43 C654.86,458.43 654.86,458.43 657.20,458.43 C659.54,458.43 659.54,458.43 661.88,458.43 C664.21,458.43 664.21,458.43 666.55,458.43 C668.89,458.43 668.89,458.43 671.23,458.43 C673.57,458.43 673.57,458.43 675.91,458.43 C678.25,458.43 678.25,458.43 680.59,458.43 C682.93,458.43 682.93,458.43 685.27,458.43 C687.60,458.43 687.60,458.43 689.94,458.43 C692.28,458.43 692.28,458.43 694.62,458.43 C696.96,458.43 696.96,458.43 699.30,458.43 C701.64,458.43 701.64,458.43 703.98,458.43 C706.32,458.43 706.32,458.43 708.66,458.43 C710.99,458.43 710.99,458.43 713.33,458.43 C715.67,458.43 715.67,458.43 718.01,458.43 C720.35,458.43 720.35,458.43 722.69,458.43 C723.62,458.43 724.19,459.25 724.56,458.43 C729.34,447.81 727.49,445.15 732.98,435.55 C734.04,433.71 735.32,435.55 737.66,435.55 C740.00,435.55 740.00,435.55 742.34,435.55 C743.97,435.55 744.08,435.99 745.61,435.55 C748.05,434.86 747.83,433.88 750.29,433.28 C752.50,432.74 752.63,433.28 754.97,433.28 C757.31,433.28 757.31,433.28 759.65,433.28 C761.98,433.28 761.98,433.28 764.32,433.28 C766.66,433.28 766.66,433.28 769.00,433.28 C771.34,433.28 771.34,433.28 773.68,433.28 C776.02,433.28 776.02,433.28 778.36,433.28 C780.70,433.28 780.70,433.28 783.04,433.28 C784.67,433.28 785.00,434.09 786.31,433.28 C789.44,431.36 788.70,429.53 791.92,427.83 C793.85,426.81 794.26,427.83 796.60,427.83 C798.94,427.83 798.94,427.83 801.28,427.83 C803.62,427.83 803.62,427.83 805.96,427.83 C808.30,427.83 808.30,427.83 810.64,427.83 C812.97,427.83 812.97,427.83 815.31,427.83 C817.65,427.83 817.65,427.83 819.99,427.83 C822.33,427.83 822.33,427.83 824.67,427.83 C827.01,427.83 827.01,427.83 829.35,427.83 C831.69,427.83 831.69,427.83 834.03,427.83 C836.36,427.83 836.36,427.83 838.70,427.83 C841.04,427.83 841.04,427.83 843.38,427.83 C845.72,427.83 845.72,427.83 848.06,427.83 C850.40,427.83 850.40,427.83 852.74,427.83 C855.08,427.83 855.08,427.83 857.42,427.83 C859.75,427.83 859.75,427.83 862.09,427.83 C864.43,427.83 864.43,427.83 866.77,427.83 C869.11,427.83 869.11,427.83 871.45,427.83 C873.79,427.83 873.79,427.83 876.13,427.83 C878.47,427.83 878.47,427.83 880.81,427.83 C883.14,427.83 883.14,427.83 885.48,427.83 C887.82,427.83 887.82,427.83 890.16,427.83 C892.50,427.83 892.50,427.83 894.84,427.83 C897.18,427.83 897.18,427.83 899.52,427.83 C901.86,427.83 901.86,427.83 904.20,427.83 C906.53,427.83 906.53,427.83 908.87,427.83 C911.21,427.83 911.21,427.83 913.55,427.83 C915.89,427.83 915.89,427.83 918.23,427.83 C920.57,427.83 920.57,427.83 922.91,427.83 C925.25,427.83 925.25,427.83 927.59,427.83 C929.92,427.83 929.92,427.83 932.26,427.83 C934.60,427.83 934.60,427.83 936.94,427.83 C939.28,427.83 939.28,427.83 941.62,427.83 C943.96,427.83 943.96,427.83 946.30,427.83 C948.15,427.83 948.15,427.83 950.00,427.83" fill="none" stroke="#4f70dc" stroke-width="2.5" stroke-linejoin="round"/>
</g>
<text transform="translate(94.6,561.20) scale(0.880,1)" text-anchor="end" font-size="14" fill="#57607a">0%</text>
<text transform="translate(94.6,500.60) scale(0.925,1)" text-anchor="end" font-size="14" fill="#57607a">20%</text>
<text transform="translate(94.6,440.00) scale(0.925,1)" text-anchor="end" font-size="14" fill="#57607a">40%</text>
<text transform="translate(94.6,379.40) scale(0.925,1)" text-anchor="end" font-size="14" fill="#57607a">60%</text>
<text transform="translate(94.6,318.80) scale(0.925,1)" text-anchor="end" font-size="14" fill="#57607a">80%</text>
<text transform="translate(94.6,258.20) scale(0.985,1)" text-anchor="end" font-size="14" fill="#57607a">100%</text>
<text transform="translate(110.90,578.00) rotate(-50)" text-anchor="end" font-size="15" fill="#545d78">Sep 1st 2025</text>
<text transform="translate(138.82,578.00) rotate(-50)" text-anchor="end" font-size="15" fill="#545d78">Sep 7th 2025</text>
<text transform="translate(166.74,578.00) rotate(-50)" text-anchor="end" font-size="15" fill="#545d78">Sep 13th 2025</text>
<text transform="translate(194.66,578.00) rotate(-50)" text-anchor="end" font-size="15" fill="#545d78">Sep 19th 2025</text>
<text transform="translate(222.58,578.00) rotate(-50)" text-anchor="end" font-size="15" fill="#545d78">Sep 25th 2025</text>
<text transform="translate(250.50,578.00) rotate(-50)" text-anchor="end" font-size="15" fill="#545d78">Oct 1st 2025</text>
<text transform="translate(278.42,578.00) rotate(-50)" text-anchor="end" font-size="15" fill="#545d78">Oct 7th 2025</text>
<text transform="translate(306.34,578.00) rotate(-50)" text-anchor="end" font-size="15" fill="#545d78">Oct 13th 2025</text>
<text transform="translate(334.26,578.00) rotate(-50)" text-anchor="end" font-size="15" fill="#545d78">Oct 19th 2025</text>
<text transform="translate(362.18,578.00) rotate(-50)" text-anchor="end" font-size="15" fill="#545d78">Oct 25th 2025</text>
<text transform="translate(390.10,578.00) rotate(-50)" text-anchor="end" font-size="15" fill="#545d78">Oct 31st 2025</text>
<text transform="translate(418.02,578.00) rotate(-50)" text-anchor="end" font-size="15" fill="#545d78">Nov 6th 2025</text>
<text transform="translate(445.94,578.00) rotate(-50)" text-anchor="end" font-size="15" fill="#545d78">Nov 12th 2025</text>
<text transform="translate(473.86,578.00) rotate(-50)" text-anchor="end" font-size="15" fill="#545d78">Nov 18th 2025</text>
<text transform="translate(501.78,578.00) rotate(-50)" text-anchor="end" font-size="15" fill="#545d78">Nov 24th 2025</text>
<text transform="translate(529.70,578.00) rotate(-50)" text-anchor="end" font-size="15" fill="#545d78">Nov 30th 2025</text>
<text transform="translate(557.62,578.00) rotate(-50)" text-anchor="end" font-size="15" fill="#545d78">Dec 6th 2025</text>
<text transform="translate(585.54,578.00) rotate(-50)" text-anchor="end" font-size="15" fill="#545d78">Dec 12th 2025</text>
<text transform="translate(613.46,578.00) rotate(-50)" text-anchor="end" font-size="15" fill="#545d78">Dec 18th 2025</text>
<text transform="translate(641.38,578.00) rotate(-50)" text-anchor="end" font-size="15" fill="#545d78">Dec 24th 2025</text>
<text transform="translate(669.30,578.00) rotate(-50)" text-anchor="end" font-size="15" fill="#545d78">Dec 30th 2025</text>
<text transform="translate(697.22,578.00) rotate(-50)" text-anchor="end" font-size="15" fill="#545d78">Jan 5th</text>
<text transform="translate(725.14,578.00) rotate(-50)" text-anchor="end" font-size="15" fill="#545d78">Jan 11th</text>
<text transform="translate(753.06,578.00) rotate(-50)" text-anchor="end" font-size="15" fill="#545d78">Jan 17th</text>
<text transform="translate(780.98,578.00) rotate(-50)" text-anchor="end" font-size="15" fill="#545d78">Jan 23rd</text>
<text transform="translate(808.90,578.00) rotate(-50)" text-anchor="end" font-size="15" fill="#545d78">Jan 29th</text>
<text transform="translate(836.82,578.00) rotate(-50)" text-anchor="end" font-size="15" fill="#545d78">Feb 4th</text>
<text transform="translate(864.74,578.00) rotate(-50)" text-anchor="end" font-size="15" fill="#545d78">Feb 10th</text>
<text transform="translate(892.66,578.00) rotate(-50)" text-anchor="end" font-size="15" fill="#545d78">Feb 16th</text>
<text transform="translate(920.58,578.00) rotate(-50)" text-anchor="end" font-size="15" fill="#545d78">Feb 22nd</text>
<text transform="translate(948.50,578.00) rotate(-50)" text-anchor="end" font-size="15" fill="#545d78">Feb 28th</text>
<line x1="1303.10" x2="1303.10" y1="240" y2="619.5" stroke="#e8e9ef" stroke-width="1.2"/>
<line x1="1408.67" x2="1408.67" y1="240" y2="619.5" stroke="#e8e9ef" stroke-width="1.2"/>
<line x1="1514.24" x2="1514.24" y1="240" y2="619.5" stroke="#e8e9ef" stroke-width="1.2"/>
<line x1="1619.81" x2="1619.81" y1="240" y2="619.5" stroke="#e8e9ef" stroke-width="1.2"/>
<line x1="1725.38" x2="1725.38" y1="240" y2="619.5" stroke="#e8e9ef" stroke-width="1.2"/>
<line x1="1830.95" x2="1830.95" y1="240" y2="619.5" stroke="#e8e9ef" stroke-width="1.2"/>
<line x1="1936.52" x2="1936.52" y1="240" y2="619.5" stroke="#e8e9ef" stroke-width="1.2"/>
<rect x="1303" y="259.20" width="535.00" height="9.8" fill="#4c72db"/>
<rect x="1303" y="306.50" width="118.80" height="9.8" fill="#4c72db"/>
<rect x="1303" y="353.70" width="131.90" height="9.8" fill="#4c72db"/>
<rect x="1303" y="400.90" width="6.60" height="9.8" fill="#4c72db"/>
<rect x="1303" y="495.90" width="39.50" height="9.8" fill="#4c72db"/>
<rect x="1303" y="543.50" width="145.00" height="9.8" fill="#4c72db"/>
<rect x="1303" y="590.90" width="455.00" height="9.8" fill="#4c72db"/>
<text x="1303.10" y="645.6" text-anchor="middle" font-size="14" fill="#5d6680">0</text>
<text x="1408.67" y="645.6" text-anchor="middle" font-size="14" fill="#5d6680">16</text>
<text x="1514.24" y="645.6" text-anchor="middle" font-size="14" fill="#5d6680">32</text>
<text x="1619.81" y="645.6" text-anchor="middle" font-size="14" fill="#5d6680">48</text>
<text x="1725.38" y="645.6" text-anchor="middle" font-size="14" fill="#5d6680">64</text>
<text x="1830.95" y="645.6" text-anchor="middle" font-size="14" fill="#5d6680">80</text>
<text x="1936.52" y="645.6" text-anchor="middle" font-size="14" fill="#5d6680">96</text>
</svg>
<div id="t_an" class="t" style="left:21.60px;top:16.01px;font-size:17.00px;line-height:17.00px;font-weight:400;color:#5d6680;transform:scaleX(1.0707)">Analytics</div>
<div id="t_ov" class="t" style="left:149.50px;top:15.81px;font-size:17.00px;line-height:17.00px;font-weight:400;color:#1f2539;transform:scaleX(1.0254)">Overview</div>
<div id="t_im" class="t" style="left:276.50px;top:15.81px;font-size:17.00px;line-height:17.00px;font-weight:400;color:#1f2539;transform:scaleX(1.0792)">Internal monitoring</div>
<div id="t_pm" class="t" style="left:482.10px;top:15.81px;font-size:17.00px;line-height:17.00px;font-weight:400;color:#1f2539;transform:scaleX(1.0776)">Public monitoring</div>
<div id="t_nhi" class="t" style="left:676.00px;top:15.81px;font-size:17.00px;line-height:17.00px;font-weight:400;color:#ffffff;transform:scaleX(1.0328)">NHI governance</div>
<div id="t_pos" class="t" style="left:16.50px;top:88.71px;font-size:19.60px;line-height:19.60px;font-weight:400;color:#1b2234;transform:scaleX(1.0578);-webkit-text-stroke:0.65px #1b2234">Posture management</div>
<div id="t_sub" class="t" style="left:17.50px;top:121.43px;font-size:16.50px;line-height:16.50px;font-weight:400;color:#5a6378;transform:scaleX(1.0492)">Quickly assess your secret risk and hygiene scores</div>
<div id="t_evo" class="t" style="left:47.00px;top:194.71px;font-size:17.00px;line-height:17.00px;font-weight:400;color:#1f2539;transform:scaleX(1.0555);-webkit-text-stroke:0.60px #1f2539">Evolution of breached policies</div>
<div id="t_bpd" class="t" style="left:1041.00px;top:194.71px;font-size:17.00px;line-height:17.00px;font-weight:400;color:#1f2539;transform:scaleX(1.0746);-webkit-text-stroke:0.60px #1f2539">Breached policies distribution</div>
<div id="l1" class="t" style="left:1041.50px;top:253.73px;font-size:16.50px;line-height:16.50px;font-weight:400;color:#2f5cc6;transform:scaleX(1.0834);-webkit-text-stroke:0.35px #2f5cc6">Publicly leaked</div>
<div id="l2" class="t" style="left:1041.50px;top:298.13px;font-size:16.50px;line-height:16.50px;font-weight:400;color:#2f5cc6;transform:scaleX(1.0866);-webkit-text-stroke:0.35px #2f5cc6">Internally leaked</div>
<div id="l3" class="t" style="left:1041.50px;top:342.13px;font-size:16.50px;line-height:16.50px;font-weight:400;color:#2f5cc6;transform:scaleX(1.0894);-webkit-text-stroke:0.35px #2f5cc6">Cross environment secret</div>
<div id="l4" class="t" style="left:1041.50px;top:386.93px;font-size:16.50px;line-height:16.50px;font-weight:400;color:#2f5cc6;transform:scaleX(1.1338);-webkit-text-stroke:0.35px #2f5cc6">Improper offboarding</div>
<div id="l5" class="t" style="left:1041.50px;top:431.93px;font-size:16.50px;line-height:16.50px;font-weight:400;color:#2f5cc6;transform:scaleX(1.0939);-webkit-text-stroke:0.35px #2f5cc6">Insecure cloud deployment</div>
<div id="l6" class="t" style="left:1041.50px;top:454.63px;font-size:16.50px;line-height:16.50px;font-weight:400;color:#2f5cc6;transform:scaleX(1.1101);-webkit-text-stroke:0.35px #2f5cc6">configurations</div>
<div id="l7" class="t" style="left:1041.50px;top:499.53px;font-size:16.50px;line-height:16.50px;font-weight:400;color:#2f5cc6;transform:scaleX(1.0667);-webkit-text-stroke:0.35px #2f5cc6">Reused secret</div>
<div id="l8" class="t" style="left:1041.50px;top:544.03px;font-size:16.50px;line-height:16.50px;font-weight:400;color:#2f5cc6;transform:scaleX(1.1048);-webkit-text-stroke:0.35px #2f5cc6">Duplicated secret</div>
<div id="l9" class="t" style="left:1041.50px;top:588.13px;font-size:16.50px;line-height:16.50px;font-weight:400;color:#2f5cc6;transform:scaleX(1.0791);-webkit-text-stroke:0.35px #2f5cc6">Long lived secret</div>
</body></html>
